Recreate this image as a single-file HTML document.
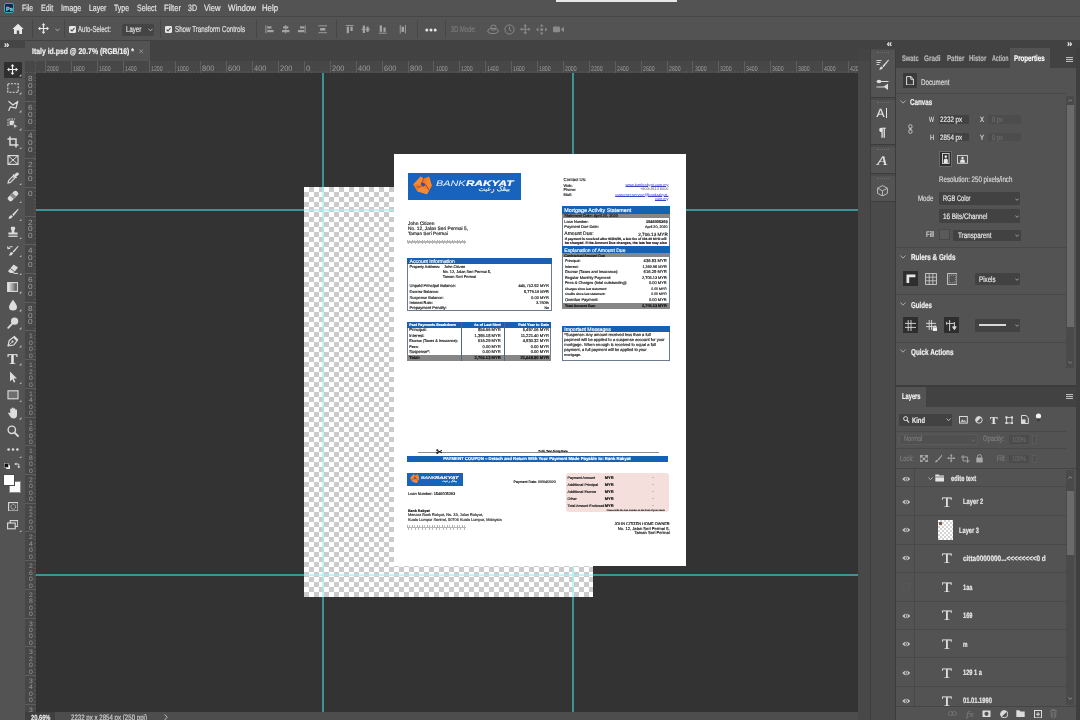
<!DOCTYPE html>
<html>
<head>
<meta charset="utf-8">
<title>Photoshop</title>
<style>
*{box-sizing:border-box;margin:0;padding:0}
html,body{width:1080px;height:720px;overflow:hidden;background:#535353}
#app{will-change:transform;position:relative;width:1080px;height:720px;overflow:hidden;font-family:"Liberation Sans",sans-serif;font-size:9px;color:#dedede}
.a{position:absolute;display:block}
.t{position:absolute;text-rendering:geometricPrecision;-webkit-text-stroke:0.18px;white-space:nowrap;line-height:1;transform-origin:0 50%}
</style>
</head>
<body>
<div id="app">
<div class="a" style="left:0px;top:0px;width:1080px;height:720px;background:#535353;"></div>
<div class="a" style="left:0px;top:16px;width:1080px;height:1px;background:#474747;"></div>
<div class="a" style="left:0px;top:40px;width:1080px;height:21px;background:#424242;"></div>
<div class="a" style="left:25px;top:41px;width:125px;height:20px;background:#535353;"></div>
<div class="a" style="left:0px;top:40px;width:25px;height:672px;background:#535353;"></div>
<div class="a" style="left:0px;top:40px;width:25px;height:8px;background:#454545;"></div>
<div class="a" style="left:25px;top:61px;width:833px;height:12px;background:#474747;"></div>
<div class="a" style="left:25px;top:73px;width:11px;height:639px;background:#474747;"></div>
<div class="a" style="left:36px;top:73px;width:822px;height:639px;background:#333333;"></div>
<div class="a" style="left:0px;top:712px;width:858px;height:8px;background:#535353;"></div>
<div class="a" style="left:858px;top:40px;width:222px;height:680px;background:#484848;"></div>
<div class="a" style="left:556px;top:0px;width:121px;height:2px;background:#e8e8e8;"></div>
<div class="a" style="left:4px;top:3px;width:10px;height:10px;background:#0a2a3c;border:1px solid #3fa0c8;border-radius:2px;"></div>
<span class="t" style="left:5.60px;top:7.00px;font-size:6px;color:#9fd4f0;font-weight:700;transform:scaleX(0.954);">Ps</span>
<span class="t" style="left:22.00px;top:4.00px;font-size:9.2px;color:#e6e6e6;transform:scaleX(0.742);">File</span>
<span class="t" style="left:40.80px;top:4.00px;font-size:9.2px;color:#e6e6e6;transform:scaleX(0.770);">Edit</span>
<span class="t" style="left:60.80px;top:4.00px;font-size:9.2px;color:#e6e6e6;transform:scaleX(0.798);">Image</span>
<span class="t" style="left:88.80px;top:4.00px;font-size:9.2px;color:#e6e6e6;transform:scaleX(0.756);">Layer</span>
<span class="t" style="left:114.00px;top:4.00px;font-size:9.2px;color:#e6e6e6;transform:scaleX(0.752);">Type</span>
<span class="t" style="left:137.00px;top:4.00px;font-size:9.2px;color:#e6e6e6;transform:scaleX(0.763);">Select</span>
<span class="t" style="left:164.00px;top:4.00px;font-size:9.2px;color:#e6e6e6;transform:scaleX(0.832);">Filter</span>
<span class="t" style="left:187.50px;top:4.00px;font-size:9.2px;color:#e6e6e6;transform:scaleX(0.765);">3D</span>
<span class="t" style="left:203.50px;top:4.00px;font-size:9.2px;color:#e6e6e6;transform:scaleX(0.834);">View</span>
<span class="t" style="left:227.50px;top:4.00px;font-size:9.2px;color:#e6e6e6;transform:scaleX(0.856);">Window</span>
<span class="t" style="left:262.00px;top:4.00px;font-size:9.2px;color:#e6e6e6;transform:scaleX(0.846);">Help</span>
<svg class="a" style="left:12px;top:23px;" width="12" height="12" viewBox="0 0 12 12"><path d="M6 0.8 L0.4 6 H2 V11 H4.8 V7.6 H7.2 V11 H10 V6 H11.6 Z" fill="#e8e8e8"/></svg>
<div class="a" style="left:32px;top:20px;width:1px;height:18px;background:#474747;"></div>
<svg class="a" style="left:38px;top:23.2px;" width="11" height="11" viewBox="0 0 11 11"><path d="M5.5 0 L7.4 2.3 H6.1 V4.9 H8.7 V3.6 L11 5.5 L8.7 7.4 V6.1 H6.1 V8.7 H7.4 L5.5 11 L3.6 8.7 H4.9 V6.1 H2.3 V7.4 L0 5.5 L2.3 3.6 V4.9 H4.9 V2.3 H3.6 Z" fill="#e8e8e8"/></svg>
<svg class="a" style="left:54.5px;top:28px;" width="5" height="4" viewBox="0 0 5 4"><path d="M0.5 0.7 L2.5 2.9 L4.5 0.7" stroke="#a8a8a8" stroke-width="1" fill="none"/></svg>
<div class="a" style="left:64px;top:20px;width:1px;height:18px;background:#474747;"></div>
<svg class="a" style="left:69px;top:25.5px;" width="7" height="7" viewBox="0 0 7 7"><rect x="0" y="0" width="7" height="7" rx="1.2" fill="#e6e6e6"/><path d="M1.6 3.6 L3 5 L5.5 2" stroke="#444" stroke-width="1.1" fill="none"/></svg>
<span class="t" style="left:78.30px;top:25.00px;font-size:8.6px;color:#e0e0e0;transform:scaleX(0.704);">Auto-Select:</span>
<div class="a" style="left:121.5px;top:23.5px;width:32.5px;height:12px;background:#444444;border-radius:2px;"></div>
<span class="t" style="left:126.00px;top:26.00px;font-size:8.2px;color:#e0e0e0;transform:scaleX(0.746);">Layer</span>
<svg class="a" style="left:147.5px;top:28px;" width="5" height="4" viewBox="0 0 5 4"><path d="M0.5 0.7 L2.5 2.9 L4.5 0.7" stroke="#b0b0b0" stroke-width="1" fill="none"/></svg>
<div class="a" style="left:160px;top:20px;width:1px;height:18px;background:#474747;"></div>
<svg class="a" style="left:165.3px;top:25.5px;" width="7" height="7" viewBox="0 0 7 7"><rect x="0" y="0" width="7" height="7" rx="1.2" fill="#e6e6e6"/><path d="M1.6 3.6 L3 5 L5.5 2" stroke="#444" stroke-width="1.1" fill="none"/></svg>
<span class="t" style="left:175.00px;top:25.00px;font-size:8.6px;color:#e0e0e0;transform:scaleX(0.722);">Show Transform Controls</span>
<div class="a" style="left:256px;top:20px;width:1px;height:18px;background:#474747;"></div>
<svg class="a" style="left:265px;top:25px;opacity:.95;" width="9.5" height="8.6" viewBox="0 0 10 10"><rect x="0" y="0.5" width="1" height="9" fill="#a9a9a9"/><rect x="2" y="1.5" width="5" height="2.6" fill="#a9a9a9"/><rect x="2" y="5.8" width="7.5" height="2.6" fill="#a9a9a9"/></svg>
<svg class="a" style="left:281px;top:25px;opacity:.95;" width="9.5" height="8.6" viewBox="0 0 10 10"><rect x="4.5" y="0" width="1" height="10" fill="#a9a9a9"/><rect x="2" y="1.5" width="6" height="2.6" fill="#a9a9a9"/><rect x="0.7" y="5.8" width="8.6" height="2.6" fill="#a9a9a9"/></svg>
<svg class="a" style="left:297px;top:25px;opacity:.95;" width="9.5" height="8.6" viewBox="0 0 10 10"><rect x="8.5" y="0.5" width="1" height="9" fill="#a9a9a9"/><rect x="3" y="1.5" width="5" height="2.6" fill="#a9a9a9"/><rect x="0.5" y="5.8" width="7.5" height="2.6" fill="#a9a9a9"/></svg>
<svg class="a" style="left:318px;top:25px;opacity:.95;" width="9.5" height="8.6" viewBox="0 0 10 10"><rect x="0" y="0.5" width="10" height="1" fill="#a9a9a9"/><rect x="0" y="8.5" width="10" height="1" fill="#a9a9a9"/><rect x="2" y="3.5" width="6" height="3" fill="#a9a9a9"/></svg>
<div class="a" style="left:336px;top:20px;width:1px;height:18px;background:#474747;"></div>
<svg class="a" style="left:345px;top:25px;opacity:.95;" width="9.5" height="8.6" viewBox="0 0 10 10"><rect x="0.5" y="0" width="9" height="1" fill="#a9a9a9"/><rect x="1.5" y="2" width="2.6" height="7.5" fill="#a9a9a9"/><rect x="5.8" y="2" width="2.6" height="5" fill="#a9a9a9"/></svg>
<svg class="a" style="left:361px;top:25px;opacity:.95;" width="9.5" height="8.6" viewBox="0 0 10 10"><rect x="0" y="4.5" width="10" height="1" fill="#a9a9a9"/><rect x="1.5" y="0.7" width="2.6" height="8.6" fill="#a9a9a9"/><rect x="5.8" y="2" width="2.6" height="6" fill="#a9a9a9"/></svg>
<svg class="a" style="left:378px;top:25px;opacity:.95;" width="9.5" height="8.6" viewBox="0 0 10 10"><rect x="0.5" y="9" width="9" height="1" fill="#a9a9a9"/><rect x="1.5" y="0.5" width="2.6" height="7.5" fill="#a9a9a9"/><rect x="5.8" y="3" width="2.6" height="5" fill="#a9a9a9"/></svg>
<svg class="a" style="left:399px;top:25px;opacity:.95;" width="7.6" height="8.6" viewBox="0 0 8 10"><rect x="0.5" y="0" width="1" height="10" fill="#a9a9a9"/><rect x="6.5" y="0" width="1" height="10" fill="#a9a9a9"/><rect x="2.5" y="2" width="3" height="6" fill="#a9a9a9"/></svg>
<div class="a" style="left:417px;top:20px;width:1px;height:18px;background:#474747;"></div>
<svg class="a" style="left:425px;top:27.5px;" width="12" height="4" viewBox="0 0 12 4"><circle cx="1.8" cy="2" r="1.5" fill="#e6e6e6"/><circle cx="6" cy="2" r="1.5" fill="#e6e6e6"/><circle cx="10.2" cy="2" r="1.5" fill="#e6e6e6"/></svg>
<div class="a" style="left:445px;top:20px;width:1px;height:18px;background:#474747;"></div>
<span class="t" style="left:451.00px;top:26.00px;font-size:8.2px;color:#7c7c7c;transform:scaleX(0.703);">3D Mode:</span>
<svg class="a" style="left:487px;top:24px;" width="12" height="11" viewBox="0 0 12 11"><ellipse cx="6" cy="7" rx="5.2" ry="2.6" fill="none" stroke="#8a8a8a" stroke-width="1"/><circle cx="6.5" cy="3.6" r="2.6" fill="none" stroke="#8a8a8a" stroke-width="1"/></svg>
<svg class="a" style="left:504px;top:24px;" width="11" height="11" viewBox="0 0 11 11"><circle cx="5.5" cy="5.5" r="4.6" fill="none" stroke="#8a8a8a" stroke-width="1"/><path d="M5.5 2.5 V5.8 L7.5 7" stroke="#8a8a8a" stroke-width="1" fill="none"/></svg>
<svg class="a" style="left:520px;top:24.3px;" width="10.5" height="10.5" viewBox="0 0 11 11"><path d="M5.5 0 L7.4 2.3 H6.1 V4.9 H8.7 V3.6 L11 5.5 L8.7 7.4 V6.1 H6.1 V8.7 H7.4 L5.5 11 L3.6 8.7 H4.9 V6.1 H2.3 V7.4 L0 5.5 L2.3 3.6 V4.9 H4.9 V2.3 H3.6 Z" fill="#8a8a8a"/></svg>
<svg class="a" style="left:536px;top:24px;" width="11.5" height="11" viewBox="0 0 11.5 11"><path d="M5.7 0 L7.6 2.4 H3.8 Z M5.7 11 L7.6 8.6 H3.8 Z M0 5.5 L2.4 3.6 V7.4 Z M11.4 5.5 L9 3.6 V7.4 Z" fill="#8a8a8a"/><circle cx="5.7" cy="5.5" r="1.6" fill="#8a8a8a"/></svg>
<svg class="a" style="left:552.5px;top:26px;" width="12" height="7" viewBox="0 0 12 7"><rect x="0" y="0.6" width="7" height="5.6" rx="1" fill="#8a8a8a"/><path d="M7.6 3.4 L11 0.6 V6.2 Z" fill="#8a8a8a"/></svg>
<span class="t" style="left:31.70px;top:47.00px;font-size:8.4px;color:#f2f2f2;font-weight:700;transform:scaleX(0.822);">Italy id.psd @ 20.7% (RGB/16) *</span>
<svg class="a" style="left:139px;top:49px;" width="4.5" height="4.5" viewBox="0 0 4.5 4.5"><path d="M0.4 0.4 L4.1 4.1 M4.1 0.4 L0.4 4.1" stroke="#9a9a9a" stroke-width="0.9"/></svg>
<svg class="a" style="left:3.8px;top:42.5px;" width="5" height="4.4" viewBox="0 0 5 4.4"><path d="M0.7 0.4 L2.1 2.2 L0.7 4 M3 0.4 L4.4 2.2 L3 4" stroke="#ececec" stroke-width="1.2" fill="none"/></svg>
<div class="a" style="left:36px;top:71px;width:822px;height:2px;background:repeating-linear-gradient(90deg,#5b5b5b 0 1px,transparent 1px 3.2375px);background-position:2.525px 0;opacity:.8;"></div>
<div class="a" style="left:34px;top:73px;width:2px;height:639px;background:repeating-linear-gradient(180deg,#5b5b5b 0 1px,transparent 1px 3.5875px);opacity:.8;"></div>
<div class="a" style="left:45px;top:61px;width:1px;height:12px;background:#5e5e5e;"></div>
<span class="t" style="left:47.00px;top:66.00px;font-size:7px;color:#9e9e9e;transform:scaleX(0.739);-webkit-text-stroke:0;">2000</span>
<div class="a" style="left:71px;top:61px;width:1px;height:12px;background:#5e5e5e;"></div>
<span class="t" style="left:72.90px;top:66.00px;font-size:7px;color:#9e9e9e;transform:scaleX(0.739);-webkit-text-stroke:0;">1800</span>
<div class="a" style="left:97px;top:61px;width:1px;height:12px;background:#5e5e5e;"></div>
<span class="t" style="left:98.80px;top:66.00px;font-size:7px;color:#9e9e9e;transform:scaleX(0.739);-webkit-text-stroke:0;">1600</span>
<div class="a" style="left:123px;top:61px;width:1px;height:12px;background:#5e5e5e;"></div>
<span class="t" style="left:124.70px;top:66.00px;font-size:7px;color:#9e9e9e;transform:scaleX(0.739);-webkit-text-stroke:0;">1400</span>
<div class="a" style="left:149px;top:61px;width:1px;height:12px;background:#5e5e5e;"></div>
<span class="t" style="left:150.60px;top:66.00px;font-size:7px;color:#9e9e9e;transform:scaleX(0.739);-webkit-text-stroke:0;">1200</span>
<div class="a" style="left:175px;top:61px;width:1px;height:12px;background:#5e5e5e;"></div>
<span class="t" style="left:176.50px;top:66.00px;font-size:7px;color:#9e9e9e;transform:scaleX(0.739);-webkit-text-stroke:0;">1000</span>
<div class="a" style="left:200px;top:61px;width:1px;height:12px;background:#5e5e5e;"></div>
<span class="t" style="left:202.40px;top:65.00px;font-size:8px;color:#9e9e9e;transform:scaleX(0.929);-webkit-text-stroke:0;">800</span>
<div class="a" style="left:226px;top:61px;width:1px;height:12px;background:#5e5e5e;"></div>
<span class="t" style="left:228.30px;top:65.00px;font-size:8px;color:#9e9e9e;transform:scaleX(0.929);-webkit-text-stroke:0;">600</span>
<div class="a" style="left:252px;top:61px;width:1px;height:12px;background:#5e5e5e;"></div>
<span class="t" style="left:254.20px;top:65.00px;font-size:8px;color:#9e9e9e;transform:scaleX(0.929);-webkit-text-stroke:0;">400</span>
<div class="a" style="left:278px;top:61px;width:1px;height:12px;background:#5e5e5e;"></div>
<span class="t" style="left:280.10px;top:65.00px;font-size:8px;color:#9e9e9e;transform:scaleX(0.929);-webkit-text-stroke:0;">200</span>
<div class="a" style="left:304px;top:61px;width:1px;height:12px;background:#5e5e5e;"></div>
<span class="t" style="left:306.00px;top:65.00px;font-size:8px;color:#9e9e9e;-webkit-text-stroke:0;">0</span>
<div class="a" style="left:330px;top:61px;width:1px;height:12px;background:#5e5e5e;"></div>
<span class="t" style="left:331.90px;top:65.00px;font-size:8px;color:#9e9e9e;transform:scaleX(0.929);-webkit-text-stroke:0;">200</span>
<div class="a" style="left:356px;top:61px;width:1px;height:12px;background:#5e5e5e;"></div>
<span class="t" style="left:357.80px;top:65.00px;font-size:8px;color:#9e9e9e;transform:scaleX(0.929);-webkit-text-stroke:0;">400</span>
<div class="a" style="left:382px;top:61px;width:1px;height:12px;background:#5e5e5e;"></div>
<span class="t" style="left:383.70px;top:65.00px;font-size:8px;color:#9e9e9e;transform:scaleX(0.929);-webkit-text-stroke:0;">600</span>
<div class="a" style="left:408px;top:61px;width:1px;height:12px;background:#5e5e5e;"></div>
<span class="t" style="left:409.60px;top:65.00px;font-size:8px;color:#9e9e9e;transform:scaleX(0.929);-webkit-text-stroke:0;">800</span>
<div class="a" style="left:433px;top:61px;width:1px;height:12px;background:#5e5e5e;"></div>
<span class="t" style="left:435.50px;top:66.00px;font-size:7px;color:#9e9e9e;transform:scaleX(0.739);-webkit-text-stroke:0;">1000</span>
<div class="a" style="left:459px;top:61px;width:1px;height:12px;background:#5e5e5e;"></div>
<span class="t" style="left:461.40px;top:66.00px;font-size:7px;color:#9e9e9e;transform:scaleX(0.739);-webkit-text-stroke:0;">1200</span>
<div class="a" style="left:485px;top:61px;width:1px;height:12px;background:#5e5e5e;"></div>
<span class="t" style="left:487.30px;top:66.00px;font-size:7px;color:#9e9e9e;transform:scaleX(0.739);-webkit-text-stroke:0;">1400</span>
<div class="a" style="left:511px;top:61px;width:1px;height:12px;background:#5e5e5e;"></div>
<span class="t" style="left:513.20px;top:66.00px;font-size:7px;color:#9e9e9e;transform:scaleX(0.739);-webkit-text-stroke:0;">1600</span>
<div class="a" style="left:537px;top:61px;width:1px;height:12px;background:#5e5e5e;"></div>
<span class="t" style="left:539.10px;top:66.00px;font-size:7px;color:#9e9e9e;transform:scaleX(0.739);-webkit-text-stroke:0;">1800</span>
<div class="a" style="left:563px;top:61px;width:1px;height:12px;background:#5e5e5e;"></div>
<span class="t" style="left:565.00px;top:66.00px;font-size:7px;color:#9e9e9e;transform:scaleX(0.739);-webkit-text-stroke:0;">2000</span>
<div class="a" style="left:589px;top:61px;width:1px;height:12px;background:#5e5e5e;"></div>
<span class="t" style="left:590.90px;top:66.00px;font-size:7px;color:#9e9e9e;transform:scaleX(0.739);-webkit-text-stroke:0;">2200</span>
<div class="a" style="left:615px;top:61px;width:1px;height:12px;background:#5e5e5e;"></div>
<span class="t" style="left:616.80px;top:66.00px;font-size:7px;color:#9e9e9e;transform:scaleX(0.739);-webkit-text-stroke:0;">2400</span>
<div class="a" style="left:641px;top:61px;width:1px;height:12px;background:#5e5e5e;"></div>
<span class="t" style="left:642.70px;top:66.00px;font-size:7px;color:#9e9e9e;transform:scaleX(0.739);-webkit-text-stroke:0;">2600</span>
<div class="a" style="left:667px;top:61px;width:1px;height:12px;background:#5e5e5e;"></div>
<span class="t" style="left:668.60px;top:66.00px;font-size:7px;color:#9e9e9e;transform:scaleX(0.739);-webkit-text-stroke:0;">2800</span>
<div class="a" style="left:692px;top:61px;width:1px;height:12px;background:#5e5e5e;"></div>
<span class="t" style="left:694.50px;top:66.00px;font-size:7px;color:#9e9e9e;transform:scaleX(0.739);-webkit-text-stroke:0;">3000</span>
<div class="a" style="left:718px;top:61px;width:1px;height:12px;background:#5e5e5e;"></div>
<span class="t" style="left:720.40px;top:66.00px;font-size:7px;color:#9e9e9e;transform:scaleX(0.739);-webkit-text-stroke:0;">3200</span>
<div class="a" style="left:744px;top:61px;width:1px;height:12px;background:#5e5e5e;"></div>
<span class="t" style="left:746.30px;top:66.00px;font-size:7px;color:#9e9e9e;transform:scaleX(0.739);-webkit-text-stroke:0;">3400</span>
<div class="a" style="left:770px;top:61px;width:1px;height:12px;background:#5e5e5e;"></div>
<span class="t" style="left:772.20px;top:66.00px;font-size:7px;color:#9e9e9e;transform:scaleX(0.739);-webkit-text-stroke:0;">3600</span>
<div class="a" style="left:796px;top:61px;width:1px;height:12px;background:#5e5e5e;"></div>
<span class="t" style="left:798.10px;top:66.00px;font-size:7px;color:#9e9e9e;transform:scaleX(0.739);-webkit-text-stroke:0;">3800</span>
<div class="a" style="left:822px;top:61px;width:1px;height:12px;background:#5e5e5e;"></div>
<span class="t" style="left:824.00px;top:66.00px;font-size:7px;color:#9e9e9e;transform:scaleX(0.739);-webkit-text-stroke:0;">4000</span>
<div class="a" style="left:848px;top:61px;width:1px;height:12px;background:#5e5e5e;"></div>
<span class="t" style="left:849.90px;top:66.00px;font-size:7px;color:#9e9e9e;transform:scaleX(0.739);-webkit-text-stroke:0;">4200</span>
<span class="t" style="left:28.20px;top:75.00px;font-size:7.6px;color:#9e9e9e;transform:scaleX(1.088);-webkit-text-stroke:0;">8</span>
<span class="t" style="left:28.20px;top:82.00px;font-size:7.6px;color:#9e9e9e;transform:scaleX(1.088);-webkit-text-stroke:0;">0</span>
<span class="t" style="left:28.20px;top:89.00px;font-size:7.6px;color:#9e9e9e;transform:scaleX(1.088);-webkit-text-stroke:0;">0</span>
<div class="a" style="left:25px;top:101px;width:11px;height:1px;background:#5e5e5e;"></div>
<span class="t" style="left:28.20px;top:104.00px;font-size:7.6px;color:#9e9e9e;transform:scaleX(1.088);-webkit-text-stroke:0;">6</span>
<span class="t" style="left:28.20px;top:111.00px;font-size:7.6px;color:#9e9e9e;transform:scaleX(1.088);-webkit-text-stroke:0;">0</span>
<span class="t" style="left:28.20px;top:118.00px;font-size:7.6px;color:#9e9e9e;transform:scaleX(1.088);-webkit-text-stroke:0;">0</span>
<div class="a" style="left:25px;top:130px;width:11px;height:1px;background:#5e5e5e;"></div>
<span class="t" style="left:28.20px;top:132.00px;font-size:7.6px;color:#9e9e9e;transform:scaleX(1.088);-webkit-text-stroke:0;">4</span>
<span class="t" style="left:28.20px;top:139.00px;font-size:7.6px;color:#9e9e9e;transform:scaleX(1.088);-webkit-text-stroke:0;">0</span>
<span class="t" style="left:28.20px;top:146.00px;font-size:7.6px;color:#9e9e9e;transform:scaleX(1.088);-webkit-text-stroke:0;">0</span>
<div class="a" style="left:25px;top:158px;width:11px;height:1px;background:#5e5e5e;"></div>
<span class="t" style="left:28.20px;top:161.00px;font-size:7.6px;color:#9e9e9e;transform:scaleX(1.088);-webkit-text-stroke:0;">2</span>
<span class="t" style="left:28.20px;top:168.00px;font-size:7.6px;color:#9e9e9e;transform:scaleX(1.088);-webkit-text-stroke:0;">0</span>
<span class="t" style="left:28.20px;top:175.00px;font-size:7.6px;color:#9e9e9e;transform:scaleX(1.088);-webkit-text-stroke:0;">0</span>
<div class="a" style="left:25px;top:187px;width:11px;height:1px;background:#5e5e5e;"></div>
<span class="t" style="left:28.20px;top:190.00px;font-size:7.6px;color:#9e9e9e;transform:scaleX(1.088);-webkit-text-stroke:0;">0</span>
<div class="a" style="left:25px;top:216px;width:11px;height:1px;background:#5e5e5e;"></div>
<span class="t" style="left:28.20px;top:219.00px;font-size:7.6px;color:#9e9e9e;transform:scaleX(1.088);-webkit-text-stroke:0;">2</span>
<span class="t" style="left:28.20px;top:225.00px;font-size:7.6px;color:#9e9e9e;transform:scaleX(1.088);-webkit-text-stroke:0;">0</span>
<span class="t" style="left:28.20px;top:232.00px;font-size:7.6px;color:#9e9e9e;transform:scaleX(1.088);-webkit-text-stroke:0;">0</span>
<div class="a" style="left:25px;top:244px;width:11px;height:1px;background:#5e5e5e;"></div>
<span class="t" style="left:28.20px;top:247.00px;font-size:7.6px;color:#9e9e9e;transform:scaleX(1.088);-webkit-text-stroke:0;">4</span>
<span class="t" style="left:28.20px;top:254.00px;font-size:7.6px;color:#9e9e9e;transform:scaleX(1.088);-webkit-text-stroke:0;">0</span>
<span class="t" style="left:28.20px;top:261.00px;font-size:7.6px;color:#9e9e9e;transform:scaleX(1.088);-webkit-text-stroke:0;">0</span>
<div class="a" style="left:25px;top:273px;width:11px;height:1px;background:#5e5e5e;"></div>
<span class="t" style="left:28.20px;top:276.00px;font-size:7.6px;color:#9e9e9e;transform:scaleX(1.088);-webkit-text-stroke:0;">6</span>
<span class="t" style="left:28.20px;top:283.00px;font-size:7.6px;color:#9e9e9e;transform:scaleX(1.088);-webkit-text-stroke:0;">0</span>
<span class="t" style="left:28.20px;top:290.00px;font-size:7.6px;color:#9e9e9e;transform:scaleX(1.088);-webkit-text-stroke:0;">0</span>
<div class="a" style="left:25px;top:302px;width:11px;height:1px;background:#5e5e5e;"></div>
<span class="t" style="left:28.20px;top:305.00px;font-size:7.6px;color:#9e9e9e;transform:scaleX(1.088);-webkit-text-stroke:0;">8</span>
<span class="t" style="left:28.20px;top:312.00px;font-size:7.6px;color:#9e9e9e;transform:scaleX(1.088);-webkit-text-stroke:0;">0</span>
<span class="t" style="left:28.20px;top:318.00px;font-size:7.6px;color:#9e9e9e;transform:scaleX(1.088);-webkit-text-stroke:0;">0</span>
<div class="a" style="left:25px;top:330px;width:11px;height:1px;background:#5e5e5e;"></div>
<span class="t" style="left:28.60px;top:334.00px;font-size:6.4px;color:#989898;transform:scaleX(1.068);-webkit-text-stroke:0;">1</span>
<span class="t" style="left:28.60px;top:341.00px;font-size:6.4px;color:#989898;transform:scaleX(1.068);-webkit-text-stroke:0;">0</span>
<span class="t" style="left:28.60px;top:347.00px;font-size:6.4px;color:#989898;transform:scaleX(1.068);-webkit-text-stroke:0;">0</span>
<span class="t" style="left:28.60px;top:354.00px;font-size:6.4px;color:#989898;transform:scaleX(1.068);-webkit-text-stroke:0;">0</span>
<div class="a" style="left:25px;top:359px;width:11px;height:1px;background:#5e5e5e;"></div>
<span class="t" style="left:28.60px;top:363.00px;font-size:6.4px;color:#989898;transform:scaleX(1.068);-webkit-text-stroke:0;">1</span>
<span class="t" style="left:28.60px;top:370.00px;font-size:6.4px;color:#989898;transform:scaleX(1.068);-webkit-text-stroke:0;">2</span>
<span class="t" style="left:28.60px;top:376.00px;font-size:6.4px;color:#989898;transform:scaleX(1.068);-webkit-text-stroke:0;">0</span>
<span class="t" style="left:28.60px;top:383.00px;font-size:6.4px;color:#989898;transform:scaleX(1.068);-webkit-text-stroke:0;">0</span>
<div class="a" style="left:25px;top:388px;width:11px;height:1px;background:#5e5e5e;"></div>
<span class="t" style="left:28.60px;top:392.00px;font-size:6.4px;color:#989898;transform:scaleX(1.068);-webkit-text-stroke:0;">1</span>
<span class="t" style="left:28.60px;top:398.00px;font-size:6.4px;color:#989898;transform:scaleX(1.068);-webkit-text-stroke:0;">4</span>
<span class="t" style="left:28.60px;top:405.00px;font-size:6.4px;color:#989898;transform:scaleX(1.068);-webkit-text-stroke:0;">0</span>
<span class="t" style="left:28.60px;top:411.00px;font-size:6.4px;color:#989898;transform:scaleX(1.068);-webkit-text-stroke:0;">0</span>
<div class="a" style="left:25px;top:417px;width:11px;height:1px;background:#5e5e5e;"></div>
<span class="t" style="left:28.60px;top:421.00px;font-size:6.4px;color:#989898;transform:scaleX(1.068);-webkit-text-stroke:0;">1</span>
<span class="t" style="left:28.60px;top:427.00px;font-size:6.4px;color:#989898;transform:scaleX(1.068);-webkit-text-stroke:0;">6</span>
<span class="t" style="left:28.60px;top:434.00px;font-size:6.4px;color:#989898;transform:scaleX(1.068);-webkit-text-stroke:0;">0</span>
<span class="t" style="left:28.60px;top:440.00px;font-size:6.4px;color:#989898;transform:scaleX(1.068);-webkit-text-stroke:0;">0</span>
<div class="a" style="left:25px;top:445px;width:11px;height:1px;background:#5e5e5e;"></div>
<span class="t" style="left:28.60px;top:449.00px;font-size:6.4px;color:#989898;transform:scaleX(1.068);-webkit-text-stroke:0;">1</span>
<span class="t" style="left:28.60px;top:456.00px;font-size:6.4px;color:#989898;transform:scaleX(1.068);-webkit-text-stroke:0;">8</span>
<span class="t" style="left:28.60px;top:462.00px;font-size:6.4px;color:#989898;transform:scaleX(1.068);-webkit-text-stroke:0;">0</span>
<span class="t" style="left:28.60px;top:469.00px;font-size:6.4px;color:#989898;transform:scaleX(1.068);-webkit-text-stroke:0;">0</span>
<div class="a" style="left:25px;top:474px;width:11px;height:1px;background:#5e5e5e;"></div>
<span class="t" style="left:28.60px;top:478.00px;font-size:6.4px;color:#989898;transform:scaleX(1.068);-webkit-text-stroke:0;">2</span>
<span class="t" style="left:28.60px;top:484.00px;font-size:6.4px;color:#989898;transform:scaleX(1.068);-webkit-text-stroke:0;">0</span>
<span class="t" style="left:28.60px;top:491.00px;font-size:6.4px;color:#989898;transform:scaleX(1.068);-webkit-text-stroke:0;">0</span>
<span class="t" style="left:28.60px;top:497.00px;font-size:6.4px;color:#989898;transform:scaleX(1.068);-webkit-text-stroke:0;">0</span>
<div class="a" style="left:25px;top:503px;width:11px;height:1px;background:#5e5e5e;"></div>
<span class="t" style="left:28.60px;top:507.00px;font-size:6.4px;color:#989898;transform:scaleX(1.068);-webkit-text-stroke:0;">2</span>
<span class="t" style="left:28.60px;top:513.00px;font-size:6.4px;color:#989898;transform:scaleX(1.068);-webkit-text-stroke:0;">2</span>
<span class="t" style="left:28.60px;top:520.00px;font-size:6.4px;color:#989898;transform:scaleX(1.068);-webkit-text-stroke:0;">0</span>
<span class="t" style="left:28.60px;top:526.00px;font-size:6.4px;color:#989898;transform:scaleX(1.068);-webkit-text-stroke:0;">0</span>
<div class="a" style="left:25px;top:531px;width:11px;height:1px;background:#5e5e5e;"></div>
<span class="t" style="left:28.60px;top:535.00px;font-size:6.4px;color:#989898;transform:scaleX(1.068);-webkit-text-stroke:0;">2</span>
<span class="t" style="left:28.60px;top:542.00px;font-size:6.4px;color:#989898;transform:scaleX(1.068);-webkit-text-stroke:0;">4</span>
<span class="t" style="left:28.60px;top:548.00px;font-size:6.4px;color:#989898;transform:scaleX(1.068);-webkit-text-stroke:0;">0</span>
<span class="t" style="left:28.60px;top:555.00px;font-size:6.4px;color:#989898;transform:scaleX(1.068);-webkit-text-stroke:0;">0</span>
<div class="a" style="left:25px;top:560px;width:11px;height:1px;background:#5e5e5e;"></div>
<span class="t" style="left:28.60px;top:564.00px;font-size:6.4px;color:#989898;transform:scaleX(1.068);-webkit-text-stroke:0;">2</span>
<span class="t" style="left:28.60px;top:571.00px;font-size:6.4px;color:#989898;transform:scaleX(1.068);-webkit-text-stroke:0;">6</span>
<span class="t" style="left:28.60px;top:577.00px;font-size:6.4px;color:#989898;transform:scaleX(1.068);-webkit-text-stroke:0;">0</span>
<span class="t" style="left:28.60px;top:584.00px;font-size:6.4px;color:#989898;transform:scaleX(1.068);-webkit-text-stroke:0;">0</span>
<div class="a" style="left:25px;top:589px;width:11px;height:1px;background:#5e5e5e;"></div>
<span class="t" style="left:28.60px;top:593.00px;font-size:6.4px;color:#989898;transform:scaleX(1.068);-webkit-text-stroke:0;">2</span>
<span class="t" style="left:28.60px;top:599.00px;font-size:6.4px;color:#989898;transform:scaleX(1.068);-webkit-text-stroke:0;">8</span>
<span class="t" style="left:28.60px;top:606.00px;font-size:6.4px;color:#989898;transform:scaleX(1.068);-webkit-text-stroke:0;">0</span>
<span class="t" style="left:28.60px;top:612.00px;font-size:6.4px;color:#989898;transform:scaleX(1.068);-webkit-text-stroke:0;">0</span>
<div class="a" style="left:25px;top:618px;width:11px;height:1px;background:#5e5e5e;"></div>
<span class="t" style="left:28.60px;top:622.00px;font-size:6.4px;color:#989898;transform:scaleX(1.068);-webkit-text-stroke:0;">3</span>
<span class="t" style="left:28.60px;top:628.00px;font-size:6.4px;color:#989898;transform:scaleX(1.068);-webkit-text-stroke:0;">0</span>
<span class="t" style="left:28.60px;top:634.00px;font-size:6.4px;color:#989898;transform:scaleX(1.068);-webkit-text-stroke:0;">0</span>
<span class="t" style="left:28.60px;top:641.00px;font-size:6.4px;color:#989898;transform:scaleX(1.068);-webkit-text-stroke:0;">0</span>
<div class="a" style="left:25px;top:646px;width:11px;height:1px;background:#5e5e5e;"></div>
<span class="t" style="left:28.60px;top:650.00px;font-size:6.4px;color:#989898;transform:scaleX(1.068);-webkit-text-stroke:0;">3</span>
<span class="t" style="left:28.60px;top:657.00px;font-size:6.4px;color:#989898;transform:scaleX(1.068);-webkit-text-stroke:0;">2</span>
<span class="t" style="left:28.60px;top:663.00px;font-size:6.4px;color:#989898;transform:scaleX(1.068);-webkit-text-stroke:0;">0</span>
<span class="t" style="left:28.60px;top:670.00px;font-size:6.4px;color:#989898;transform:scaleX(1.068);-webkit-text-stroke:0;">0</span>
<div class="a" style="left:25px;top:675px;width:11px;height:1px;background:#5e5e5e;"></div>
<span class="t" style="left:28.60px;top:679.00px;font-size:6.4px;color:#989898;transform:scaleX(1.068);-webkit-text-stroke:0;">3</span>
<span class="t" style="left:28.60px;top:685.00px;font-size:6.4px;color:#989898;transform:scaleX(1.068);-webkit-text-stroke:0;">4</span>
<span class="t" style="left:28.60px;top:692.00px;font-size:6.4px;color:#989898;transform:scaleX(1.068);-webkit-text-stroke:0;">0</span>
<span class="t" style="left:28.60px;top:698.00px;font-size:6.4px;color:#989898;transform:scaleX(1.068);-webkit-text-stroke:0;">0</span>
<div class="a" style="left:25px;top:704px;width:11px;height:1px;background:#5e5e5e;"></div>
<span class="t" style="left:28.60px;top:708.00px;font-size:6.4px;color:#989898;transform:scaleX(1.068);-webkit-text-stroke:0;">3</span>
<div class="a" style="left:25px;top:61px;width:11px;height:12px;background:#474747;border-right:1px dotted #5a5a5a;border-bottom:1px dotted #5a5a5a;"></div>
<div class="a" style="left:25px;top:712px;width:833px;height:8px;background:#4d4d4d;"></div>
<div class="a" style="left:25px;top:712px;width:30px;height:8px;background:#3f3f3f;"></div>
<span class="t" style="left:31.00px;top:714.00px;font-size:7.4px;color:#eaeaea;font-weight:700;transform:scaleX(0.777);">20.66%</span>
<span class="t" style="left:71.00px;top:714.00px;font-size:7.8px;color:#d0d0d0;transform:scaleX(0.786);">2232 px x 2854 px (250 ppi)</span>
<svg class="a" style="left:164px;top:713.5px;" width="4" height="6.5" viewBox="0 0 4 6.5"><path d="M0.6 0.4 L3.2 3.2 L0.6 6" stroke="#c8c8c8" stroke-width="0.9" fill="none"/></svg>
<div class="a" style="left:3.5px;top:62px;width:18.5px;height:15.5px;background:#2f2f2f;border-radius:1px;"></div>
<svg class="a" style="left:7px;top:64.2px;" width="11" height="11" viewBox="0 0 11 11"><path d="M5.5 0 L7.4 2.3 H6.1 V4.9 H8.7 V3.6 L11 5.5 L8.7 7.4 V6.1 H6.1 V8.7 H7.4 L5.5 11 L3.6 8.7 H4.9 V6.1 H2.3 V7.4 L0 5.5 L2.3 3.6 V4.9 H4.9 V2.3 H3.6 Z" fill="#f0f0f0"/></svg>
<svg class="a" style="left:19.2px;top:74.2px;" width="2.4" height="2.4" viewBox="0 0 2.4 2.4"><path d="M2.4 0 V2.4 H0 Z" fill="#bdbdbd"/></svg>
<svg class="a" style="left:6.5px;top:81.78px;" width="12" height="12" viewBox="0 0 12 12"><rect x="0.8" y="1.8" width="10.4" height="8.4" fill="none" stroke="#dcdcdc" stroke-width="1.1" stroke-dasharray="2 1.2"/></svg>
<svg class="a" style="left:19.2px;top:92.28px;" width="2.4" height="2.4" viewBox="0 0 2.4 2.4"><path d="M2.4 0 V2.4 H0 Z" fill="#bdbdbd"/></svg>
<svg class="a" style="left:6.5px;top:99.86px;" width="12" height="12" viewBox="0 0 12 12"><path d="M1.5 1.2 L6 5 L10.8 1.4 L9 8.2 L3.4 6.8 L1.6 10.8" fill="none" stroke="#dcdcdc" stroke-width="1.2" stroke-linejoin="round"/></svg>
<svg class="a" style="left:19.2px;top:110.36px;" width="2.4" height="2.4" viewBox="0 0 2.4 2.4"><path d="M2.4 0 V2.4 H0 Z" fill="#bdbdbd"/></svg>
<svg class="a" style="left:6.5px;top:117.94px;" width="12" height="12" viewBox="0 0 12 12"><path d="M1 8 V1 H8" fill="none" stroke="#dcdcdc" stroke-width="1" stroke-dasharray="1.6 1"/><rect x="2.6" y="2.6" width="4.6" height="4.6" fill="#dcdcdc"/><path d="M6.2 5.6 L11 8.4 L8.6 8.9 L7.6 11.2 Z" fill="#dcdcdc" stroke="#535353" stroke-width="0.5"/></svg>
<svg class="a" style="left:19.2px;top:128.44px;" width="2.4" height="2.4" viewBox="0 0 2.4 2.4"><path d="M2.4 0 V2.4 H0 Z" fill="#bdbdbd"/></svg>
<svg class="a" style="left:6.5px;top:136.02px;" width="12" height="12" viewBox="0 0 12 12"><path d="M3 0.5 V9 H11.5 M0.5 3 H9 V11.5" fill="none" stroke="#dcdcdc" stroke-width="1.5"/></svg>
<svg class="a" style="left:19.2px;top:146.52px;" width="2.4" height="2.4" viewBox="0 0 2.4 2.4"><path d="M2.4 0 V2.4 H0 Z" fill="#bdbdbd"/></svg>
<svg class="a" style="left:6.5px;top:154.1px;" width="12" height="12" viewBox="0 0 12 12"><rect x="1" y="1.6" width="10" height="8.8" fill="none" stroke="#dcdcdc" stroke-width="1.2"/><path d="M1 1.6 L11 10.4 M11 1.6 L1 10.4" stroke="#dcdcdc" stroke-width="1"/></svg>
<svg class="a" style="left:6.5px;top:172.18px;" width="12" height="12" viewBox="0 0 12 12"><path d="M1 11 L1.6 8.6 L6.6 3.6 L8.4 5.4 L3.4 10.4 Z" fill="none" stroke="#dcdcdc" stroke-width="1.1"/><path d="M6.2 2.4 L9.6 5.8 M7.4 4.6 L9.2 1.6 Q10.4 0.6 11 1.4 Q11.6 2.2 10.4 3 Z" fill="#dcdcdc" stroke="#dcdcdc" stroke-width="1.3"/></svg>
<svg class="a" style="left:19.2px;top:182.68px;" width="2.4" height="2.4" viewBox="0 0 2.4 2.4"><path d="M2.4 0 V2.4 H0 Z" fill="#bdbdbd"/></svg>
<svg class="a" style="left:6.5px;top:190.26px;" width="12" height="12" viewBox="0 0 12 12"><g transform="rotate(-45 6 6)"><rect x="0" y="3.4" width="12" height="5.2" rx="2" fill="#dcdcdc"/><rect x="4.2" y="3.4" width="3.6" height="5.2" fill="#8a8a8a"/></g></svg>
<svg class="a" style="left:19.2px;top:200.76px;" width="2.4" height="2.4" viewBox="0 0 2.4 2.4"><path d="M2.4 0 V2.4 H0 Z" fill="#bdbdbd"/></svg>
<svg class="a" style="left:6.5px;top:208.34px;" width="12" height="12" viewBox="0 0 12 12"><path d="M11 0.8 L5.2 6.6 L6.6 8 L11.6 1.6 Z" fill="#dcdcdc"/><path d="M4.6 7.2 Q2 7.4 1.6 11 Q5 10.8 5.8 8.4 Z" fill="#dcdcdc"/></svg>
<svg class="a" style="left:19.2px;top:218.84px;" width="2.4" height="2.4" viewBox="0 0 2.4 2.4"><path d="M2.4 0 V2.4 H0 Z" fill="#bdbdbd"/></svg>
<svg class="a" style="left:6.5px;top:226.42px;" width="12" height="12" viewBox="0 0 12 12"><path d="M4.2 0.8 H7.8 Q9 2.6 7.4 4.6 V6.4 H10.6 V8.6 H1.4 V6.4 H4.6 V4.6 Q3 2.6 4.2 0.8 Z" fill="#dcdcdc"/><rect x="1.4" y="9.6" width="9.2" height="1.3" fill="#dcdcdc"/></svg>
<svg class="a" style="left:19.2px;top:236.92px;" width="2.4" height="2.4" viewBox="0 0 2.4 2.4"><path d="M2.4 0 V2.4 H0 Z" fill="#bdbdbd"/></svg>
<svg class="a" style="left:6.5px;top:244.5px;" width="12" height="12" viewBox="0 0 12 12"><path d="M11 0.8 L5.6 6.4 L6.8 7.6 L11.6 1.6 Z" fill="#dcdcdc"/><path d="M5 7 Q2.6 7.2 2.2 10.8 Q5.4 10.6 6.2 8.2 Z" fill="#dcdcdc"/><path d="M0.8 3.6 Q2.6 0.8 5.6 1.8 M0.6 1.4 L0.9 3.8 L3.2 3.4" stroke="#dcdcdc" stroke-width="1" fill="none"/></svg>
<svg class="a" style="left:19.2px;top:255px;" width="2.4" height="2.4" viewBox="0 0 2.4 2.4"><path d="M2.4 0 V2.4 H0 Z" fill="#bdbdbd"/></svg>
<svg class="a" style="left:6.5px;top:262.58px;" width="12" height="12" viewBox="0 0 12 12"><path d="M6.6 1.4 L11 4.6 L6.6 10 H3.2 L1 8.2 Z" fill="#dcdcdc"/><path d="M3.4 5.6 L7.8 8.8" stroke="#535353" stroke-width="0.9"/><path d="M6.6 10.4 H11" stroke="#dcdcdc" stroke-width="1"/></svg>
<svg class="a" style="left:19.2px;top:273.08px;" width="2.4" height="2.4" viewBox="0 0 2.4 2.4"><path d="M2.4 0 V2.4 H0 Z" fill="#bdbdbd"/></svg>
<svg class="a" style="left:7px;top:281.66px" width="11" height="10" viewBox="0 0 11 10"><defs><linearGradient id="gt" x1="0" y1="0" x2="1" y2="0"><stop offset="0" stop-color="#f2f2f2"/><stop offset="1" stop-color="#4a4a4a"/></linearGradient></defs><rect x="0.6" y="0.6" width="9.8" height="8.8" fill="url(#gt)" stroke="#dcdcdc" stroke-width="1.1"/></svg>
<svg class="a" style="left:19.2px;top:291.16px;" width="2.4" height="2.4" viewBox="0 0 2.4 2.4"><path d="M2.4 0 V2.4 H0 Z" fill="#bdbdbd"/></svg>
<svg class="a" style="left:6.5px;top:298.74px;" width="12" height="12" viewBox="0 0 12 12"><path d="M6 0.8 Q10 6 10 8 A4 3.6 0 0 1 2 8 Q2 6 6 0.8 Z" fill="#dcdcdc"/></svg>
<svg class="a" style="left:19.2px;top:309.24px;" width="2.4" height="2.4" viewBox="0 0 2.4 2.4"><path d="M2.4 0 V2.4 H0 Z" fill="#bdbdbd"/></svg>
<svg class="a" style="left:6.5px;top:316.82px;" width="12" height="12" viewBox="0 0 12 12"><circle cx="7.6" cy="4.2" r="3.6" fill="#dcdcdc"/><path d="M5 6.8 L1.2 10.8" stroke="#dcdcdc" stroke-width="1.8" stroke-linecap="round"/></svg>
<svg class="a" style="left:19.2px;top:327.32px;" width="2.4" height="2.4" viewBox="0 0 2.4 2.4"><path d="M2.4 0 V2.4 H0 Z" fill="#bdbdbd"/></svg>
<svg class="a" style="left:6.5px;top:334.9px;" width="12" height="12" viewBox="0 0 12 12"><path d="M1 11 L2.2 5.4 L6.4 2.2 L10 5.8 L6.8 10 Z" fill="none" stroke="#dcdcdc" stroke-width="1.2" stroke-linejoin="round"/><path d="M6.8 1.4 L10.8 5.4" stroke="#dcdcdc" stroke-width="2"/><circle cx="5.6" cy="6.6" r="1.1" fill="#dcdcdc"/><path d="M1.2 10.8 L5 7.2" stroke="#dcdcdc" stroke-width="0.8"/></svg>
<svg class="a" style="left:19.2px;top:345.4px;" width="2.4" height="2.4" viewBox="0 0 2.4 2.4"><path d="M2.4 0 V2.4 H0 Z" fill="#bdbdbd"/></svg>
<span class="t" style="left:7.60px;top:353.00px;font-size:15px;color:#e6e6e6;font-weight:700;font-family:'Liberation Serif',serif;">T</span>
<svg class="a" style="left:19.2px;top:363.48px;" width="2.4" height="2.4" viewBox="0 0 2.4 2.4"><path d="M2.4 0 V2.4 H0 Z" fill="#bdbdbd"/></svg>
<svg class="a" style="left:6.5px;top:371.06px;" width="12" height="12" viewBox="0 0 12 12"><path d="M3 0.6 L10 7.4 L6.8 7.6 L8.4 11 L6.8 11.6 L5.4 8.2 L3 10.4 Z" fill="#dcdcdc"/></svg>
<svg class="a" style="left:19.2px;top:381.56px;" width="2.4" height="2.4" viewBox="0 0 2.4 2.4"><path d="M2.4 0 V2.4 H0 Z" fill="#bdbdbd"/></svg>
<svg class="a" style="left:6.5px;top:389.34px;" width="12" height="12" viewBox="0 0 12 12"><rect x="1" y="1.8" width="10" height="8" fill="#6e6e6e" stroke="#dcdcdc" stroke-width="1.1"/></svg>
<svg class="a" style="left:19.2px;top:399.84px;" width="2.4" height="2.4" viewBox="0 0 2.4 2.4"><path d="M2.4 0 V2.4 H0 Z" fill="#bdbdbd"/></svg>
<svg class="a" style="left:6.5px;top:406.8px;" width="12" height="12" viewBox="0 0 12 12"><path d="M3.2 6.4 V2.6 Q3.2 1.6 4 1.6 Q4.8 1.6 4.8 2.6 V1.6 Q4.8 0.6 5.7 0.6 Q6.6 0.6 6.6 1.6 V2.2 Q6.6 1.2 7.5 1.2 Q8.4 1.2 8.4 2.2 V3.4 Q8.4 2.6 9.2 2.6 Q10 2.6 10 3.6 V8 Q10 11.4 6.6 11.4 Q4.4 11.4 3.2 9.4 L1.2 6.6 Q0.8 5.6 1.8 5.4 Q2.6 5.4 3.2 6.4 Z" fill="#dcdcdc"/></svg>
<svg class="a" style="left:19.2px;top:417.3px;" width="2.4" height="2.4" viewBox="0 0 2.4 2.4"><path d="M2.4 0 V2.4 H0 Z" fill="#bdbdbd"/></svg>
<svg class="a" style="left:6.5px;top:425px;" width="12" height="12" viewBox="0 0 12 12"><circle cx="4.8" cy="4.8" r="3.7" fill="none" stroke="#dcdcdc" stroke-width="1.4"/><path d="M7.6 7.6 L11 11" stroke="#dcdcdc" stroke-width="1.8" stroke-linecap="round"/></svg>
<svg class="a" style="left:7px;top:448px;" width="12" height="3" viewBox="0 0 12 3"><circle cx="1.6" cy="1.5" r="1.3" fill="#dcdcdc"/><circle cx="6" cy="1.5" r="1.3" fill="#dcdcdc"/><circle cx="10.4" cy="1.5" r="1.3" fill="#dcdcdc"/></svg>
<svg class="a" style="left:19.2px;top:455.5px;" width="2.4" height="2.4" viewBox="0 0 2.4 2.4"><path d="M2.4 0 V2.4 H0 Z" fill="#bdbdbd"/></svg>
<svg class="a" style="left:3.5px;top:462.5px;" width="6.5" height="6.5" viewBox="0 0 6.5 6.5"><rect x="2.2" y="2.2" width="4" height="4" fill="#f4f4f4"/><rect x="0.3" y="0.3" width="4" height="4" fill="#111" stroke="#ccc" stroke-width="0.5"/></svg>
<svg class="a" style="left:13.5px;top:461.5px;" width="6.5" height="6.5" viewBox="0 0 6.5 6.5"><path d="M1.2 2 H4.8 V5.6" fill="none" stroke="#dcdcdc" stroke-width="0.9"/><path d="M2.4 0.4 L0.4 2 L2.4 3.6 Z M3.2 4.4 L4.8 6.4 L6.4 4.4 Z" fill="#dcdcdc"/></svg>
<div class="a" style="left:9px;top:481px;width:11.6px;height:11.8px;background:#fafafa;border:1px solid #8a8a8a;"></div>
<div class="a" style="left:2.5px;top:474px;width:12px;height:11.6px;background:#ffffff;border:1px solid #4a4a4a;"></div>
<svg class="a" style="left:7.6px;top:501.5px;" width="10.6" height="9.6" viewBox="0 0 10.6 9.6"><rect x="0.6" y="0.6" width="9.4" height="8.4" fill="none" stroke="#dcdcdc" stroke-width="1.1"/><circle cx="5.3" cy="4.8" r="2.4" fill="none" stroke="#dcdcdc" stroke-width="0.9" stroke-dasharray="1.2 0.8"/></svg>
<svg class="a" style="left:7px;top:520px;" width="11.4" height="9.6" viewBox="0 0 11.4 9.6"><rect x="3.2" y="0.6" width="7.6" height="5.8" fill="#535353" stroke="#dcdcdc" stroke-width="1.1"/><rect x="0.6" y="3" width="7.6" height="5.8" fill="#535353" stroke="#dcdcdc" stroke-width="1.1"/></svg>
<svg class="a" style="left:19.4px;top:529.5px;" width="2.4" height="2.4" viewBox="0 0 2.4 2.4"><path d="M2.4 0 V2.4 H0 Z" fill="#bdbdbd"/></svg>
<div class="a" style="left:303.5px;top:187px;width:289px;height:410px;background-color:#ffffff;background-image:conic-gradient(#cbcbcb 25%,#fff 0 50%,#cbcbcb 0 75%,#fff 0);background-size:10px 10px;background-position:0 0;"></div>
<div class="a" style="left:322.4px;top:73px;width:1.9px;height:114px;background:#3d9496;"></div>
<div class="a" style="left:322.4px;top:597px;width:1.9px;height:115px;background:#3d9496;"></div>
<div class="a" style="left:322.4px;top:187px;width:1.9px;height:410px;background:rgba(165,242,242,.68);"></div>
<div class="a" style="left:571.9px;top:73px;width:1.9px;height:114px;background:#3d9496;"></div>
<div class="a" style="left:571.9px;top:597px;width:1.9px;height:115px;background:#3d9496;"></div>
<div class="a" style="left:571.9px;top:187px;width:1.9px;height:410px;background:rgba(165,242,242,.68);"></div>
<div class="a" style="left:36px;top:209.2px;width:267.5px;height:1.9px;background:#3d9496;"></div>
<div class="a" style="left:592.5px;top:209.2px;width:265.5px;height:1.9px;background:#3d9496;"></div>
<div class="a" style="left:303.5px;top:209.2px;width:289px;height:1.9px;background:rgba(165,242,242,.68);"></div>
<div class="a" style="left:36px;top:573.9px;width:267.5px;height:1.9px;background:#3d9496;"></div>
<div class="a" style="left:592.5px;top:573.9px;width:265.5px;height:1.9px;background:#3d9496;"></div>
<div class="a" style="left:303.5px;top:573.9px;width:289px;height:1.9px;background:rgba(165,242,242,.68);"></div>
<div class="a" style="left:394px;top:154px;width:292px;height:412px;background:#ffffff;"></div>
<div class="a" style="left:408px;top:173px;width:113px;height:27px;background:#1763bd;"></div>
<svg class="a" style="left:413px;top:176.2px" width="19" height="18.4" viewBox="0 0 19 18.4"><path d="M7.7 0.4 L10.6 2.4 L16 0.4 L18.8 9.6 L14 18.2 L4.2 15.2 L0.2 8.4 Z" fill="#f47b20"/><path d="M7.7 0.4 L10.6 2.4 L8.2 8.2 L0.2 8.4 Z" fill="#f58a35"/><path d="M16 0.4 L18.8 9.6 L16.4 14 L12.4 8.2 Z" fill="#f9862a"/><path d="M4.2 15.2 L14 18.2 L16.4 14 L8 10.6 Z" fill="#f28a3a"/><path d="M10.8 2 L8 8.4 M12.6 8.4 L16.2 14.4 M8 10.8 L3.6 11" stroke="#9a3c28" stroke-width="0.8" fill="none"/><path d="M8.6 6.6 L11.4 7 L12.4 9.2 L10 10.8 L8.2 9.4 Z" fill="#3c4aa8"/></svg>
<span class="t" style="left:436.00px;top:180.00px;font-size:8.1px;color:#eef4ff;font-style:italic;transform:scaleX(1.342);-webkit-text-stroke:0;">BANK</span>
<span class="t" style="left:465.60px;top:180.00px;font-size:8.1px;color:#ffffff;font-weight:700;font-style:italic;transform:scaleX(1.456);-webkit-text-stroke:0.16px;">RAKYAT</span>
<span class="t" dir="rtl" style="left:471.5px;top:186.2px;font-size:6.8px;color:#dfe9f8;font-family:'DejaVu Sans',sans-serif;width:38.5px;text-align:right">بيڠک رعيت</span>
<span class="t" style="left:563.60px;top:178.00px;font-size:4.3px;color:#222;-webkit-text-stroke:0.16px;">Contact Us:</span>
<span class="t" style="left:563.60px;top:184.00px;font-size:3.9px;color:#222;-webkit-text-stroke:0.16px;">Web:</span>
<span class="t" style="left:563.60px;top:188.00px;font-size:3.9px;color:#222;-webkit-text-stroke:0.16px;">Phone:</span>
<span class="t" style="left:563.60px;top:193.00px;font-size:3.9px;color:#222;-webkit-text-stroke:0.16px;">Mail:</span>
<span class="t" style="left:625.47px;top:183.00px;font-size:3.9px;color:#3a44c6;text-decoration:underline;text-decoration-thickness:0.35px;text-underline-offset:0.4px;-webkit-text-stroke:0;">www.bankrakyat.com.my</span>
<span class="t" style="left:640.08px;top:187.00px;font-size:3.9px;color:#555;-webkit-text-stroke:0;">+603-2614 6000</span>
<span class="t" style="left:615.22px;top:193.00px;font-size:3.9px;color:#3a44c6;text-decoration:underline;text-decoration-thickness:0.35px;text-underline-offset:0.4px;-webkit-text-stroke:0;">customer.service@bankrakyat.</span>
<span class="t" style="left:654.95px;top:197.00px;font-size:3.9px;color:#3a44c6;text-decoration:underline;text-decoration-thickness:0.35px;text-underline-offset:0.4px;-webkit-text-stroke:0;">com.my</span>
<span class="t" style="left:408.00px;top:223.00px;font-size:4.8px;color:#1a1a1a;-webkit-text-stroke:0.16px;">John Citizen</span>
<span class="t" style="left:408.00px;top:228.00px;font-size:4.8px;color:#1a1a1a;-webkit-text-stroke:0.16px;">No. 12, Jalan Seri Permai 5,</span>
<span class="t" style="left:408.00px;top:232.00px;font-size:4.7px;color:#1a1a1a;-webkit-text-stroke:0.16px;">Taman Seri Permai</span>
<div class="a" style="left:407px;top:241.3px;width:59px;height:1.7px;background:#b4b4b4;"></div>
<div class="a" style="left:407px;top:240px;width:59px;height:1.3px;background:repeating-linear-gradient(90deg,#b0b0b0 0 1px,transparent 1px 2px,#c4c4c4 2px 2.6px,transparent 2.6px 5px);"></div>
<div class="a" style="left:407px;top:243px;width:59px;height:1.3px;background:repeating-linear-gradient(90deg,transparent 0 1px,#b6b6b6 1px 1.8px,transparent 1.8px 4px,#bebebe 4px 5px,transparent 5px 7px);"></div>
<div class="a" style="left:562px;top:206px;width:108.4px;height:102.6px;background:#ffffff;border:0.6px solid #6c7a90;"></div>
<div class="a" style="left:562px;top:206px;width:108.4px;height:8px;background:#1760b2;"></div>
<span class="t" style="left:564.30px;top:209.00px;font-size:5.38px;color:#ffffff;-webkit-text-stroke:0.16px;">Mortgage Activity Statement</span>
<div class="a" style="left:562px;top:214px;width:108.4px;height:3.6px;background:#868686;"></div>
<span class="t" style="left:564.30px;top:214.00px;font-size:3.94px;color:#111;-webkit-text-stroke:0.16px;">Statement Date: April 20, 2020</span>
<span class="t" style="left:564.30px;top:221.00px;font-size:3.83px;color:#1a1a1a;-webkit-text-stroke:0.16px;">Loan Number:</span>
<span class="t" style="left:646.02px;top:220.00px;font-size:3.88px;color:#1a1a1a;font-weight:700;-webkit-text-stroke:0.16px;">1546005293</span>
<span class="t" style="left:564.30px;top:225.00px;font-size:3.98px;color:#1a1a1a;-webkit-text-stroke:0.16px;">Payment Due Date:</span>
<span class="t" style="left:645.02px;top:226.00px;font-size:3.66px;color:#1a1a1a;-webkit-text-stroke:0.16px;">April 20, 2020</span>
<span class="t" style="left:564.30px;top:232.00px;font-size:5.05px;color:#1a1a1a;-webkit-text-stroke:0.16px;">Amount Due:</span>
<span class="t" style="left:638.27px;top:233.00px;font-size:4.62px;color:#1a1a1a;-webkit-text-stroke:0.16px;">2,706.13 MYR</span>
<span class="t" style="left:564.80px;top:238.00px;font-size:3.3px;color:#1a1a1a;font-weight:700;-webkit-text-stroke:0.16px;">If payment is received after 05/04/20, a late fee of 104.40 MYR will</span>
<span class="t" style="left:564.80px;top:242.00px;font-size:3.5px;color:#1a1a1a;font-weight:700;-webkit-text-stroke:0.16px;">be charged. If the Amount Due changes, the late fee may also</span>
<div class="a" style="left:562px;top:245.8px;width:108.4px;height:7.4px;background:#1760b2;"></div>
<span class="t" style="left:564.30px;top:249.00px;font-size:5.06px;color:#ffffff;-webkit-text-stroke:0.16px;">Explanation of Amount Due</span>
<div class="a" style="left:562px;top:253.2px;width:108.4px;height:4.2px;background:#868686;"></div>
<span class="t" style="left:564.30px;top:255.00px;font-size:3.76px;color:#111;-webkit-text-stroke:0.16px;">Contractual Amount Due</span>
<span class="t" style="left:564.90px;top:260.00px;font-size:3.79px;color:#1a1a1a;-webkit-text-stroke:0.16px;">Principal:</span>
<span class="t" style="left:643.58px;top:259.00px;font-size:4.16px;color:#1a1a1a;-webkit-text-stroke:0.16px;">436.53 MYR</span>
<span class="t" style="left:564.90px;top:266.00px;font-size:3.79px;color:#1a1a1a;-webkit-text-stroke:0.16px;">Interest:</span>
<span class="t" style="left:642.47px;top:266.00px;font-size:3.79px;color:#1a1a1a;-webkit-text-stroke:0.16px;">1,392.96 MYR</span>
<span class="t" style="left:564.90px;top:270.00px;font-size:3.9px;color:#1a1a1a;-webkit-text-stroke:0.16px;">Escrow (Taxes and Insurance):</span>
<span class="t" style="left:643.58px;top:270.00px;font-size:4.16px;color:#1a1a1a;-webkit-text-stroke:0.16px;">616.29 MYR</span>
<span class="t" style="left:564.90px;top:276.00px;font-size:3.93px;color:#1a1a1a;-webkit-text-stroke:0.16px;">Regular Monthly Payment:</span>
<span class="t" style="left:642.03px;top:277.00px;font-size:3.86px;color:#1a1a1a;-webkit-text-stroke:0.16px;">2,706.13 MYR</span>
<span class="t" style="left:564.90px;top:281.00px;font-size:3.95px;color:#1a1a1a;-webkit-text-stroke:0.16px;">Fees &amp; Charges (total outstanding):</span>
<span class="t" style="left:648.92px;top:281.00px;font-size:4px;color:#1a1a1a;-webkit-text-stroke:0.16px;">0.00 MYR</span>
<span class="t" style="left:564.90px;top:288.00px;font-size:3.19px;color:#1a1a1a;-webkit-text-stroke:0.16px;">Charges since last statement:</span>
<span class="t" style="left:651.32px;top:288.00px;font-size:3.46px;color:#1a1a1a;-webkit-text-stroke:0.16px;">0.00 MYR</span>
<span class="t" style="left:564.90px;top:293.00px;font-size:3.22px;color:#1a1a1a;-webkit-text-stroke:0.16px;">Credits since last statement:</span>
<span class="t" style="left:651.32px;top:293.00px;font-size:3.46px;color:#1a1a1a;-webkit-text-stroke:0.16px;">0.00 MYR</span>
<span class="t" style="left:564.90px;top:298.00px;font-size:4.02px;color:#1a1a1a;-webkit-text-stroke:0.16px;">Overdue Payment:</span>
<span class="t" style="left:648.92px;top:298.00px;font-size:4px;color:#1a1a1a;-webkit-text-stroke:0.16px;">0.00 MYR</span>
<div class="a" style="left:562px;top:303px;width:108.4px;height:5.6px;background:#868686;"></div>
<span class="t" style="left:564.90px;top:305.00px;font-size:3.49px;color:#111;font-weight:700;-webkit-text-stroke:0.16px;">Total Amount Due:</span>
<span class="t" style="left:642.03px;top:305.00px;font-size:3.86px;color:#111;font-weight:700;-webkit-text-stroke:0.16px;">2,706.13 MYR</span>
<div class="a" style="left:407px;top:258.1px;width:144.6px;height:53px;background:#ffffff;border:0.6px solid #6c7a90;"></div>
<div class="a" style="left:407px;top:258.1px;width:144.6px;height:5.5px;background:#1760b2;"></div>
<span class="t" style="left:409.60px;top:260.00px;font-size:5.08px;color:#ffffff;-webkit-text-stroke:0.16px;">Account Information</span>
<span class="t" style="left:409.60px;top:266.00px;font-size:3.82px;color:#1a1a1a;-webkit-text-stroke:0.16px;">Property Address:</span>
<span class="t" style="left:444.10px;top:266.00px;font-size:3.83px;color:#1a1a1a;-webkit-text-stroke:0.16px;">John Citizen</span>
<span class="t" style="left:442.70px;top:270.00px;font-size:3.87px;color:#1a1a1a;-webkit-text-stroke:0.16px;">No. 12, Jalan Seri Permai 5,</span>
<span class="t" style="left:442.70px;top:275.00px;font-size:3.95px;color:#1a1a1a;-webkit-text-stroke:0.16px;">Taman Seri Permai</span>
<span class="t" style="left:409.60px;top:284.00px;font-size:4.05px;color:#1a1a1a;-webkit-text-stroke:0.16px;">Unpaid Principal Balance:</span>
<span class="t" style="left:518.51px;top:284.00px;font-size:4.05px;color:#1a1a1a;-webkit-text-stroke:0.16px;">445,752.92 MYR</span>
<span class="t" style="left:409.60px;top:290.00px;font-size:3.92px;color:#1a1a1a;-webkit-text-stroke:0.16px;">Escrow Balance:</span>
<span class="t" style="left:524.10px;top:290.00px;font-size:3.88px;color:#1a1a1a;-webkit-text-stroke:0.16px;">5,779.19 MYR</span>
<span class="t" style="left:409.60px;top:296.00px;font-size:3.96px;color:#1a1a1a;-webkit-text-stroke:0.16px;">Suspense Balance:</span>
<span class="t" style="left:531.12px;top:296.00px;font-size:4px;color:#1a1a1a;-webkit-text-stroke:0.16px;">0.00 MYR</span>
<span class="t" style="left:409.60px;top:301.00px;font-size:3.88px;color:#1a1a1a;-webkit-text-stroke:0.16px;">Interest Rate:</span>
<span class="t" style="left:536.28px;top:302.00px;font-size:3.72px;color:#1a1a1a;-webkit-text-stroke:0.16px;">3.750%</span>
<span class="t" style="left:409.60px;top:306.00px;font-size:4px;color:#1a1a1a;-webkit-text-stroke:0.16px;">Prepayment Penalty:</span>
<span class="t" style="left:544.40px;top:307.00px;font-size:3.52px;color:#1a1a1a;-webkit-text-stroke:0.16px;">No</span>
<div class="a" style="left:407px;top:321.7px;width:144.4px;height:39.4px;background:#ffffff;border:0.6px solid #6c7a90;"></div>
<div class="a" style="left:407px;top:321.7px;width:144.4px;height:5.9px;background:#1760b2;"></div>
<span class="t" style="left:409.20px;top:324.00px;font-size:3.66px;color:#ffffff;font-weight:700;-webkit-text-stroke:0.16px;">Past Payments Breakdown</span>
<span class="t" style="left:474.01px;top:324.00px;font-size:3.64px;color:#ffffff;font-weight:700;-webkit-text-stroke:0.16px;">As of Last Stmt</span>
<span class="t" style="left:518.17px;top:324.00px;font-size:3.77px;color:#ffffff;font-weight:700;-webkit-text-stroke:0.16px;">Paid Year to Date</span>
<span class="t" style="left:409.20px;top:328.00px;font-size:4.26px;color:#1a1a1a;-webkit-text-stroke:0.16px;">Principal:</span>
<span class="t" style="left:477.91px;top:328.00px;font-size:4.1px;color:#1a1a1a;-webkit-text-stroke:0.16px;">854.66 MYR</span>
<span class="t" style="left:522.69px;top:328.00px;font-size:4.1px;color:#1a1a1a;-webkit-text-stroke:0.16px;">5,497.06 MYR</span>
<span class="t" style="left:409.20px;top:334.00px;font-size:4.26px;color:#1a1a1a;-webkit-text-stroke:0.16px;">Interest:</span>
<span class="t" style="left:474.49px;top:334.00px;font-size:4.1px;color:#1a1a1a;-webkit-text-stroke:0.16px;">1,395.18 MYR</span>
<span class="t" style="left:520.72px;top:334.00px;font-size:4.1px;color:#1a1a1a;-webkit-text-stroke:0.16px;">11,221.40 MYR</span>
<span class="t" style="left:409.20px;top:340.00px;font-size:3.83px;color:#1a1a1a;-webkit-text-stroke:0.16px;">Escrow (Taxes &amp; Insurance):</span>
<span class="t" style="left:477.91px;top:339.00px;font-size:4.1px;color:#1a1a1a;-webkit-text-stroke:0.16px;">516.29 MYR</span>
<span class="t" style="left:522.69px;top:339.00px;font-size:4.1px;color:#1a1a1a;-webkit-text-stroke:0.16px;">4,930.32 MYR</span>
<span class="t" style="left:409.20px;top:346.00px;font-size:3.76px;color:#1a1a1a;-webkit-text-stroke:0.16px;">Fees:</span>
<span class="t" style="left:482.47px;top:345.00px;font-size:4.1px;color:#1a1a1a;-webkit-text-stroke:0.16px;">0.00 MYR</span>
<span class="t" style="left:530.67px;top:345.00px;font-size:4.1px;color:#1a1a1a;-webkit-text-stroke:0.16px;">0.00 MYR</span>
<span class="t" style="left:409.20px;top:350.00px;font-size:4.07px;color:#1a1a1a;-webkit-text-stroke:0.16px;">Suspense*:</span>
<span class="t" style="left:482.47px;top:350.00px;font-size:4.1px;color:#1a1a1a;-webkit-text-stroke:0.16px;">0.00 MYR</span>
<span class="t" style="left:530.67px;top:350.00px;font-size:4.1px;color:#1a1a1a;-webkit-text-stroke:0.16px;">0.00 MYR</span>
<div class="a" style="left:407px;top:355px;width:144.4px;height:6px;background:#868686;"></div>
<span class="t" style="left:409.20px;top:356.00px;font-size:4.1px;color:#111;font-weight:700;-webkit-text-stroke:0.16px;">Total:</span>
<span class="t" style="left:474.49px;top:356.00px;font-size:4.1px;color:#111;font-weight:700;-webkit-text-stroke:0.16px;">2,706.13 MYR</span>
<span class="t" style="left:520.41px;top:356.00px;font-size:4.1px;color:#111;font-weight:700;-webkit-text-stroke:0.16px;">21,648.80 MYR</span>
<div class="a" style="left:460.5px;top:321.7px;width:0.7px;height:39.4px;background:#55647c;"></div>
<div class="a" style="left:504.2px;top:321.7px;width:0.7px;height:39.4px;background:#55647c;"></div>
<div class="a" style="left:562px;top:326px;width:108.2px;height:34.5px;background:#ffffff;border:0.6px solid #6c7a90;"></div>
<div class="a" style="left:562px;top:326px;width:108.2px;height:6.1px;background:#1760b2;"></div>
<span class="t" style="left:564.30px;top:328.00px;font-size:5.14px;color:#ffffff;-webkit-text-stroke:0.16px;">Important Messages</span>
<span class="t" style="left:564.30px;top:333.00px;font-size:4.04px;color:#1a1a1a;-webkit-text-stroke:0.16px;">*Suspense: Any amount received less than a full</span>
<span class="t" style="left:564.30px;top:338.00px;font-size:4.14px;color:#1a1a1a;-webkit-text-stroke:0.16px;">payment will be applied to a suspense account for your</span>
<span class="t" style="left:564.30px;top:343.00px;font-size:4.12px;color:#1a1a1a;-webkit-text-stroke:0.16px;">mortgage.  When  enough  is  received  to  equal  a  full</span>
<span class="t" style="left:564.30px;top:348.00px;font-size:4.02px;color:#1a1a1a;-webkit-text-stroke:0.16px;">payment, a full payment will be applied to your</span>
<span class="t" style="left:564.30px;top:354.00px;font-size:3.78px;color:#1a1a1a;-webkit-text-stroke:0.16px;">mortgage.</span>
<div class="a" style="left:417.6px;top:451.7px;width:241.8px;height:0.9px;background:#8e8e8e;"></div>
<svg class="a" style="left:435.6px;top:449.2px;" width="6.4" height="5.2" viewBox="0 0 6.4 5.2"><circle cx="1.3" cy="1.3" r="1.1" fill="#222"/><circle cx="1.3" cy="3.9" r="1.1" fill="#222"/><path d="M1.8 1.8 L6.2 3.9 M1.8 3.4 L6.2 1.3" stroke="#111" stroke-width="1"/></svg>
<div class="a" style="left:538px;top:449.4px;width:30px;height:3px;background:#ffffff;"></div>
<span class="t" style="left:538.60px;top:450.00px;font-size:2.84px;color:#111;font-weight:700;-webkit-text-stroke:0.16px;">Fold, Tear Along Here</span>
<div class="a" style="left:406.7px;top:455.5px;width:261.1px;height:6px;background:#1760b2;"></div>
<span class="t" style="left:443.30px;top:457.00px;font-size:4.32px;color:#ffffff;font-weight:700;-webkit-text-stroke:0.16px;">PAYMENT COUPON – Detach and Return With Your Payment Made Payable to: Bank Rakyat</span>
<div class="a" style="left:407.2px;top:472.5px;width:55.8px;height:13.6px;background:#1763bd;"></div>
<svg class="a" style="left:409.6px;top:474.4px" width="9.3" height="9" viewBox="0 0 19 18.4"><path d="M7.7 0.4 L10.6 2.4 L16 0.4 L18.8 9.6 L14 18.2 L4.2 15.2 L0.2 8.4 Z" fill="#f47b20"/><path d="M7.7 0.4 L10.6 2.4 L8.2 8.2 L0.2 8.4 Z" fill="#f58a35"/><path d="M16 0.4 L18.8 9.6 L16.4 14 L12.4 8.2 Z" fill="#f9862a"/><path d="M4.2 15.2 L14 18.2 L16.4 14 L8 10.6 Z" fill="#f28a3a"/><path d="M10.8 2 L8 8.4 M12.6 8.4 L16.2 14.4 M8 10.8 L3.6 11" stroke="#9a3c28" stroke-width="0.8" fill="none"/><path d="M8.6 6.6 L11.4 7 L12.4 9.2 L10 10.8 L8.2 9.4 Z" fill="#3c4aa8"/></svg>
<span class="t" style="left:420.60px;top:476.00px;font-size:4px;color:#eaf2ff;font-style:italic;transform:scaleX(1.322);-webkit-text-stroke:0.16px;">BANK</span>
<span class="t" style="left:435.00px;top:476.00px;font-size:4px;color:#ffffff;font-weight:700;font-style:italic;transform:scaleX(1.468);-webkit-text-stroke:0.16px;">RAKYAT</span>
<span class="t" dir="rtl" style="left:438px;top:479.8px;font-size:3.2px;color:#dce8f8;font-family:'DejaVu Sans',sans-serif;width:19px;text-align:right">بيڠک رعيت</span>
<span class="t" style="left:513.60px;top:481.00px;font-size:3.55px;color:#1a1a1a;-webkit-text-stroke:0.16px;">Payment Date: 00/04/2020</span>
<span class="t" style="left:408.00px;top:492.00px;font-size:3.88px;color:#1a1a1a;-webkit-text-stroke:0.16px;">Loan Number: 1546005293</span>
<div class="a" style="left:565.5px;top:473px;width:103.1px;height:39px;background:#f5dfdd;border-radius:3px;"></div>
<span class="t" style="left:567.60px;top:477.00px;font-size:3.6px;color:#1a1a1a;-webkit-text-stroke:0.16px;">Payment Amount</span>
<span class="t" style="left:604.70px;top:476.00px;font-size:4px;color:#111;font-weight:700;-webkit-text-stroke:0.16px;">MYR</span>
<div class="a" style="left:652.4px;top:477.2px;width:1.4px;height:0.6px;background:#d4b4b4;"></div>
<span class="t" style="left:567.60px;top:484.00px;font-size:3.6px;color:#1a1a1a;-webkit-text-stroke:0.16px;">Additional Principal</span>
<span class="t" style="left:604.70px;top:483.00px;font-size:4px;color:#111;font-weight:700;-webkit-text-stroke:0.16px;">MYR</span>
<div class="a" style="left:652.4px;top:484.1px;width:1.4px;height:0.6px;background:#d4b4b4;"></div>
<span class="t" style="left:567.60px;top:491.00px;font-size:3.6px;color:#1a1a1a;-webkit-text-stroke:0.16px;">Additional Escrow</span>
<span class="t" style="left:604.70px;top:490.00px;font-size:4px;color:#111;font-weight:700;-webkit-text-stroke:0.16px;">MYR</span>
<div class="a" style="left:652.4px;top:491.1px;width:1.4px;height:0.6px;background:#d4b4b4;"></div>
<span class="t" style="left:567.60px;top:498.00px;font-size:3.6px;color:#1a1a1a;-webkit-text-stroke:0.16px;">Other</span>
<span class="t" style="left:604.70px;top:497.00px;font-size:4px;color:#111;font-weight:700;-webkit-text-stroke:0.16px;">MYR</span>
<div class="a" style="left:652.4px;top:498px;width:1.4px;height:0.6px;background:#d4b4b4;"></div>
<span class="t" style="left:567.60px;top:505.00px;font-size:3.6px;color:#1a1a1a;-webkit-text-stroke:0.16px;">Total Amount Enclosed</span>
<span class="t" style="left:604.70px;top:504.00px;font-size:4px;color:#111;font-weight:700;-webkit-text-stroke:0.16px;">MYR</span>
<div class="a" style="left:652.4px;top:505px;width:1.4px;height:0.6px;background:#d4b4b4;"></div>
<span class="t" style="left:606.82px;top:510.00px;font-size:2.2px;color:#333;font-weight:700;-webkit-text-stroke:0.16px;">Please write the loan number on the front of your check</span>
<span class="t" style="left:408.00px;top:510.00px;font-size:3.62px;color:#1a1a1a;font-weight:700;-webkit-text-stroke:0.16px;">Bank Rakyat</span>
<span class="t" style="left:408.00px;top:514.00px;font-size:3.86px;color:#333;-webkit-text-stroke:0.16px;">Menara Bank Rakyat, No. 33, Jalan Rakyat,</span>
<span class="t" style="left:408.00px;top:518.00px;font-size:3.91px;color:#333;-webkit-text-stroke:0.16px;">Kuala Lumpur Sentral, 50706 Kuala Lumpur, Malaysia</span>
<div class="a" style="left:407px;top:526.7px;width:59px;height:1.7px;background:#b4b4b4;"></div>
<div class="a" style="left:407px;top:525.4px;width:59px;height:1.3px;background:repeating-linear-gradient(90deg,#b0b0b0 0 1px,transparent 1px 2px,#c4c4c4 2px 2.6px,transparent 2.6px 5px);"></div>
<div class="a" style="left:407px;top:528.4px;width:59px;height:1.3px;background:repeating-linear-gradient(90deg,transparent 0 1px,#b6b6b6 1px 1.8px,transparent 1.8px 4px,#bebebe 4px 5px,transparent 5px 7px);"></div>
<span class="t" style="left:614.45px;top:522.00px;font-size:3.87px;color:#1a1a1a;-webkit-text-stroke:0.16px;">JOHN CITIZEN HOME OWNER</span>
<span class="t" style="left:617.80px;top:527.00px;font-size:4.15px;color:#1a1a1a;-webkit-text-stroke:0.16px;">No. 12, Jalan Seri Permai 5,</span>
<span class="t" style="left:634.41px;top:531.00px;font-size:4.15px;color:#1a1a1a;-webkit-text-stroke:0.16px;">Taman Seri Permai</span>
<div class="a" style="left:858px;top:49px;width:12px;height:671px;background:#484848;"></div>
<div class="a" style="left:858px;top:49px;width:12px;height:12px;background:#444444;"></div>
<div class="a" style="left:858px;top:40px;width:222px;height:9px;background:#424242;"></div>
<svg class="a" style="left:886.6px;top:42.3px;" width="5" height="4.4" viewBox="0 0 5 4.4"><path d="M2 0.4 L0.6 2.2 L2 4 M4.3 0.4 L2.9 2.2 L4.3 4" stroke="#ececec" stroke-width="1.2" fill="none"/></svg>
<svg class="a" style="left:1066.8px;top:42.3px;" width="5" height="4.4" viewBox="0 0 5 4.4"><path d="M0.7 0.4 L2.1 2.2 L0.7 4 M3 0.4 L4.4 2.2 L3 4" stroke="#ececec" stroke-width="1.2" fill="none"/></svg>
<div class="a" style="left:870px;top:49px;width:1px;height:671px;background:#3c3c3c;"></div>
<div class="a" style="left:895px;top:49px;width:1px;height:671px;background:#3c3c3c;"></div>
<div class="a" style="left:871px;top:49px;width:24px;height:671px;background:#4a4a4a;"></div>
<div class="a" style="left:871px;top:49.5px;width:24px;height:47.5px;background:#535353;"></div>
<div class="a" style="left:877px;top:51.5px;width:12px;height:1px;border-top:1px dotted #6a6a6a;"></div>
<div class="a" style="left:871px;top:97px;width:24px;height:1.2px;background:#3c3c3c;"></div>
<div class="a" style="left:871px;top:99.5px;width:24px;height:44.5px;background:#535353;"></div>
<div class="a" style="left:877px;top:101.5px;width:12px;height:1px;border-top:1px dotted #6a6a6a;"></div>
<div class="a" style="left:871px;top:144px;width:24px;height:1.2px;background:#3c3c3c;"></div>
<div class="a" style="left:871px;top:147px;width:24px;height:26px;background:#535353;"></div>
<div class="a" style="left:877px;top:149px;width:12px;height:1px;border-top:1px dotted #6a6a6a;"></div>
<div class="a" style="left:871px;top:173px;width:24px;height:1.2px;background:#3c3c3c;"></div>
<div class="a" style="left:871px;top:176px;width:24px;height:25px;background:#535353;"></div>
<div class="a" style="left:877px;top:178px;width:12px;height:1px;border-top:1px dotted #6a6a6a;"></div>
<div class="a" style="left:871px;top:201px;width:24px;height:1.2px;background:#3c3c3c;"></div>
<svg class="a" style="left:876px;top:59px;" width="13" height="12" viewBox="0 0 13 12"><path d="M0.5 1.5 H5.5 M0.5 3.5 H4.5 M0.5 5.5 H3.5" stroke="#dcdcdc" stroke-width="0.9"/><path d="M12.4 0.6 L6.4 7 L7.6 8.2 L12.8 1.6 Z" fill="#dcdcdc"/><path d="M5.8 7.6 Q3.8 7.8 3.4 11 Q6.2 10.8 7 8.8 Z" fill="#dcdcdc"/></svg>
<svg class="a" style="left:876px;top:79px;" width="13" height="11" viewBox="0 0 13 11"><path d="M5 2.5 H12.5 M0.5 8 H8" stroke="#dcdcdc" stroke-width="1.1"/><ellipse cx="3" cy="2.5" rx="2.4" ry="1.7" fill="#dcdcdc"/><path d="M12 4.6 V11 L7.4 7.8 Z" fill="#dcdcdc"/></svg>
<span class="t" style="left:876.50px;top:107.00px;font-size:12px;color:#e6e6e6;">A</span>
<div class="a" style="left:886.2px;top:107.5px;width:1px;height:10px;background:#e6e6e6;"></div>
<span class="t" style="left:879.00px;top:126.00px;font-size:12px;color:#e6e6e6;font-weight:700;transform:scaleX(1.049);">¶</span>
<span class="t" style="left:877.00px;top:154.00px;font-size:13px;color:#e6e6e6;font-style:italic;font-family:'Liberation Serif',serif;transform:scaleX(1.259);">A</span>
<svg class="a" style="left:877px;top:184.5px;" width="11" height="11.5" viewBox="0 0 11 11.5"><path d="M5.5 0.6 L10.4 3.2 V8.4 L5.5 11 L0.6 8.4 V3.2 Z M0.6 3.2 L5.5 5.8 L10.4 3.2 M5.5 5.8 V11" fill="none" stroke="#bcbcbc" stroke-width="1"/></svg>
<div class="a" style="left:896px;top:48px;width:180px;height:337px;background:#535353;"></div>
<div class="a" style="left:896px;top:48px;width:180px;height:20px;background:#424242;"></div>
<div class="a" style="left:1010px;top:48px;width:40px;height:21px;background:#535353;"></div>
<span class="t" style="left:901.70px;top:55.00px;font-size:8.2px;color:#b8b8b8;font-weight:700;transform:scaleX(0.700);">Swatc</span>
<span class="t" style="left:924.40px;top:55.00px;font-size:8.2px;color:#b8b8b8;font-weight:700;transform:scaleX(0.775);">Gradi</span>
<span class="t" style="left:946.70px;top:55.00px;font-size:8.2px;color:#b8b8b8;font-weight:700;transform:scaleX(0.744);">Patter</span>
<span class="t" style="left:969.00px;top:55.00px;font-size:8.2px;color:#b8b8b8;font-weight:700;transform:scaleX(0.734);">Histor</span>
<span class="t" style="left:992.00px;top:55.00px;font-size:8.2px;color:#b8b8b8;font-weight:700;transform:scaleX(0.651);">Action</span>
<span class="t" style="left:1014.00px;top:54.00px;font-size:8.4px;color:#ffffff;font-weight:700;transform:scaleX(0.739);">Properties</span>
<svg class="a" style="left:1065.5px;top:56.5px;" width="7" height="5" viewBox="0 0 7 5"><path d="M0 0.6 H7 M0 2.6 H7 M0 4.6 H7" stroke="#c8c8c8" stroke-width="1"/></svg>
<div class="a" style="left:903px;top:73.3px;width:14px;height:14.5px;background:#3a3a3a;border-radius:1px;"></div>
<svg class="a" style="left:906px;top:75.8px;" width="8" height="9.6" viewBox="0 0 8 9.6"><path d="M0.6 0.6 H5 L7.4 3 V9 H0.6 Z M4.8 0.8 V3.2 H7.2" fill="none" stroke="#e0e0e0" stroke-width="1"/></svg>
<span class="t" style="left:920.50px;top:79.00px;font-size:8.2px;color:#dcdcdc;transform:scaleX(0.763);">Document</span>
<div class="a" style="left:896px;top:92.5px;width:170px;height:1px;background:#484848;"></div>
<svg class="a" style="left:900px;top:99.6px;" width="6" height="4" viewBox="0 0 6 4"><path d="M0.5 0.5 L3 3.2 L5.5 0.5" stroke="#a8a8a8" stroke-width="1" fill="none"/></svg>
<span class="t" style="left:910.00px;top:98.00px;font-size:8.6px;color:#f0f0f0;font-weight:700;transform:scaleX(0.729);">Canvas</span>
<span class="t" style="left:929.20px;top:116.00px;font-size:7.6px;color:#dcdcdc;transform:scaleX(0.697);">W</span>
<div class="a" style="left:938.7px;top:115.1px;width:30.8px;height:8.8px;background:#424242;border-radius:1px;"></div>
<span class="t" style="left:940.40px;top:116.00px;font-size:7.8px;color:#e8e8e8;transform:scaleX(0.800);">2232 px</span>
<span class="t" style="left:980.00px;top:116.00px;font-size:7.6px;color:#dcdcdc;transform:scaleX(0.789);">X</span>
<div class="a" style="left:988.3px;top:115.1px;width:32.6px;height:8.8px;background:#4d4d4d;border-radius:1px;"></div>
<span class="t" style="left:991.70px;top:116.00px;font-size:7.6px;color:#6c6c6c;transform:scaleX(0.766);">0 px</span>
<svg class="a" style="left:908.2px;top:123.6px;" width="4.8" height="10" viewBox="0 0 4.8 10"><rect x="0.8" y="0.6" width="3.2" height="4" rx="1.5" fill="none" stroke="#c8c8c8" stroke-width="0.9"/><rect x="0.8" y="5.4" width="3.2" height="4" rx="1.5" fill="none" stroke="#c8c8c8" stroke-width="0.9"/><path d="M2.4 3.4 V6.6" stroke="#c8c8c8" stroke-width="0.9"/></svg>
<span class="t" style="left:930.00px;top:134.00px;font-size:7.6px;color:#dcdcdc;transform:scaleX(0.802);">H</span>
<div class="a" style="left:938.7px;top:132.6px;width:30.8px;height:8.8px;background:#424242;border-radius:1px;"></div>
<span class="t" style="left:940.40px;top:134.00px;font-size:7.8px;color:#e8e8e8;transform:scaleX(0.800);">2854 px</span>
<span class="t" style="left:980.00px;top:134.00px;font-size:7.6px;color:#dcdcdc;transform:scaleX(0.789);">Y</span>
<div class="a" style="left:988.3px;top:132.6px;width:32.6px;height:8.8px;background:#4d4d4d;border-radius:1px;"></div>
<span class="t" style="left:991.70px;top:134.00px;font-size:7.6px;color:#6c6c6c;transform:scaleX(0.766);">0 px</span>
<div class="a" style="left:939px;top:151px;width:13.4px;height:15.8px;background:#2e2e2e;border:1px solid #6a6a6a;"></div>
<svg class="a" style="left:942px;top:153.4px;" width="7.6" height="11" viewBox="0 0 7.6 11"><rect x="0.5" y="0.5" width="6.6" height="10" fill="none" stroke="#d8d8d8" stroke-width="0.9"/><circle cx="3.8" cy="3.6" r="1.3" fill="#e8e8e8"/><path d="M1.8 10 V7 Q1.8 5.4 3.8 5.4 Q5.8 5.4 5.8 7 V10 Z" fill="#e8e8e8"/></svg>
<svg class="a" style="left:957px;top:155px;" width="11" height="8.8" viewBox="0 0 11 8.8"><rect x="0.5" y="0.5" width="10" height="7.8" fill="none" stroke="#d8d8d8" stroke-width="0.9"/><circle cx="5.5" cy="3" r="1.2" fill="#e8e8e8"/><path d="M3.2 7.8 V6 Q3.2 4.6 5.5 4.6 Q7.8 4.6 7.8 6 V7.8 Z" fill="#e8e8e8"/></svg>
<span class="t" style="left:938.60px;top:176.00px;font-size:8px;color:#dcdcdc;transform:scaleX(0.771);">Resolution: 250 pixels/inch</span>
<span class="t" style="left:918.30px;top:195.00px;font-size:8px;color:#dcdcdc;transform:scaleX(0.765);">Mode</span>
<div class="a" style="left:938.7px;top:192px;width:81.8px;height:13px;background:#424242;border-radius:1px;"></div>
<span class="t" style="left:943.30px;top:195.00px;font-size:8px;color:#e8e8e8;transform:scaleX(0.711);">RGB Color</span>
<svg class="a" style="left:1014.6px;top:197.6px;" width="4.2" height="3" viewBox="0 0 4.2 3"><path d="M0.4 0.5 L2.1 2.4 L3.8 0.5" stroke="#a4a4a4" stroke-width="0.9" fill="none"/></svg>
<div class="a" style="left:938.7px;top:209.4px;width:81.8px;height:13.2px;background:#424242;border-radius:1px;"></div>
<span class="t" style="left:943.30px;top:213.00px;font-size:8px;color:#e8e8e8;transform:scaleX(0.788);">16 Bits/Channel</span>
<svg class="a" style="left:1014.6px;top:215.2px;" width="4.2" height="3" viewBox="0 0 4.2 3"><path d="M0.4 0.5 L2.1 2.4 L3.8 0.5" stroke="#a4a4a4" stroke-width="0.9" fill="none"/></svg>
<span class="t" style="left:925.80px;top:231.00px;font-size:8px;color:#dcdcdc;transform:scaleX(0.783);">Fill</span>
<div class="a" style="left:939px;top:229.4px;width:11px;height:11px;background:#5a5a5a;border:1px solid #484848;"></div>
<div class="a" style="left:953px;top:229.5px;width:67.5px;height:11px;background:#424242;border-radius:1px;"></div>
<span class="t" style="left:957.50px;top:232.00px;font-size:8px;color:#e8e8e8;transform:scaleX(0.782);">Transparent</span>
<svg class="a" style="left:1014.6px;top:234px;" width="4.2" height="3" viewBox="0 0 4.2 3"><path d="M0.4 0.5 L2.1 2.4 L3.8 0.5" stroke="#a4a4a4" stroke-width="0.9" fill="none"/></svg>
<div class="a" style="left:896px;top:247px;width:170px;height:1px;background:#484848;"></div>
<svg class="a" style="left:900px;top:254.5px;" width="6" height="4" viewBox="0 0 6 4"><path d="M0.5 0.5 L3 3.2 L5.5 0.5" stroke="#a8a8a8" stroke-width="1" fill="none"/></svg>
<span class="t" style="left:910.50px;top:253.00px;font-size:8.6px;color:#f0f0f0;font-weight:700;transform:scaleX(0.739);">Rulers &amp; Grids</span>
<div class="a" style="left:903px;top:271.4px;width:15.3px;height:14.6px;background:#2e2e2e;"></div>
<svg class="a" style="left:906px;top:273.6px;" width="9.6" height="9.6" viewBox="0 0 9.6 9.6"><path d="M0.5 9.4 V0.5 H9.4 V3.2 H3.2 V9.4 Z" fill="#e8e8e8"/></svg>
<svg class="a" style="left:925px;top:272.6px;" width="12" height="12" viewBox="0 0 12 12"><rect x="0.6" y="0.6" width="10.8" height="10.8" fill="none" stroke="#d0d0d0" stroke-width="0.9"/><path d="M4.2 0.6 V11.4 M7.8 0.6 V11.4 M0.6 4.2 H11.4 M0.6 7.8 H11.4" stroke="#d0d0d0" stroke-width="0.8"/></svg>
<svg class="a" style="left:946.6px;top:272.6px;" width="10.6" height="12" viewBox="0 0 10.6 12"><rect x="0.6" y="0.6" width="9.4" height="10.8" fill="none" stroke="#d0d0d0" stroke-width="0.9"/><rect x="2.2" y="2.2" width="6.2" height="7.6" fill="none" stroke="#a8a8a8" stroke-width="0.8" stroke-dasharray="1 1"/></svg>
<div class="a" style="left:974.7px;top:272.8px;width:45.8px;height:12.5px;background:#424242;border-radius:1px;"></div>
<span class="t" style="left:979.00px;top:276.00px;font-size:8px;color:#e8e8e8;transform:scaleX(0.778);">Pixels</span>
<svg class="a" style="left:1014.6px;top:278px;" width="4.2" height="3" viewBox="0 0 4.2 3"><path d="M0.4 0.5 L2.1 2.4 L3.8 0.5" stroke="#a4a4a4" stroke-width="0.9" fill="none"/></svg>
<div class="a" style="left:896px;top:294.4px;width:170px;height:1px;background:#484848;"></div>
<svg class="a" style="left:900px;top:301.8px;" width="6" height="4" viewBox="0 0 6 4"><path d="M0.5 0.5 L3 3.2 L5.5 0.5" stroke="#a8a8a8" stroke-width="1" fill="none"/></svg>
<span class="t" style="left:910.50px;top:301.00px;font-size:8.6px;color:#f0f0f0;font-weight:700;transform:scaleX(0.720);">Guides</span>
<div class="a" style="left:903px;top:317px;width:15.3px;height:16.3px;background:#2e2e2e;"></div>
<svg class="a" style="left:905.4px;top:319.5px;" width="11" height="11" viewBox="0 0 11 11"><path d="M3.2 0 V11 M6 0 V11 M0 3.4 H11 M0 7.4 H11" stroke="#dcdcdc" stroke-width="0.9"/></svg>
<svg class="a" style="left:925.8px;top:319.5px;" width="11.4" height="11.4" viewBox="0 0 11.4 11.4"><path d="M3.2 0 V10 M5.6 0 V10 M0 3.4 H10 M0 6.6 H10" stroke="#dcdcdc" stroke-width="0.9"/><rect x="6.8" y="7.4" width="4.4" height="3.6" fill="#f0f0f0"/><path d="M7.8 7.4 V6.4 Q9 5.2 10.2 6.4 V7.4" fill="none" stroke="#f0f0f0" stroke-width="0.8"/></svg>
<div class="a" style="left:944px;top:317px;width:15px;height:16.3px;background:#2e2e2e;"></div>
<svg class="a" style="left:946px;top:319.5px;" width="11.4" height="11.4" viewBox="0 0 11.4 11.4"><path d="M3.6 0 V11 M0 3.4 H8" stroke="#dcdcdc" stroke-width="0.9"/><path d="M8.4 2 V8.2 M6.6 6.8 L8.4 9.8 L10.2 6.8 Z" stroke="#dcdcdc" stroke-width="0.9" fill="#dcdcdc"/><path d="M1 1.6 L0 3.4 L1 5" stroke="#dcdcdc" stroke-width="0.7" fill="none"/></svg>
<div class="a" style="left:974.7px;top:318.5px;width:45.8px;height:13px;background:#424242;border-radius:1px;"></div>
<div class="a" style="left:979px;top:324.3px;width:27px;height:1.4px;background:#d8d8d8;"></div>
<svg class="a" style="left:1014.6px;top:324px;" width="4.2" height="3" viewBox="0 0 4.2 3"><path d="M0.4 0.5 L2.1 2.4 L3.8 0.5" stroke="#a4a4a4" stroke-width="0.9" fill="none"/></svg>
<div class="a" style="left:896px;top:341.7px;width:170px;height:1px;background:#484848;"></div>
<svg class="a" style="left:900px;top:349.2px;" width="6" height="4" viewBox="0 0 6 4"><path d="M0.5 0.5 L3 3.2 L5.5 0.5" stroke="#a8a8a8" stroke-width="1" fill="none"/></svg>
<span class="t" style="left:910.50px;top:348.00px;font-size:8.6px;color:#f0f0f0;font-weight:700;transform:scaleX(0.739);">Quick Actions</span>
<div class="a" style="left:1066.2px;top:96px;width:7.8px;height:272px;background:#4a4a4a;"></div>
<div class="a" style="left:1066.8px;top:104.8px;width:6.8px;height:222px;background:#6b6b6b;"></div>
<svg class="a" style="left:1067.8px;top:99px;" width="4.6" height="3" viewBox="0 0 4.6 3"><path d="M0.4 2.6 L2.3 0.6 L4.2 2.6" stroke="#8a8a8a" stroke-width="0.9" fill="none"/></svg>
<svg class="a" style="left:1067.8px;top:360.5px;" width="4.6" height="3" viewBox="0 0 4.6 3"><path d="M0.4 0.4 L2.3 2.4 L4.2 0.4" stroke="#8a8a8a" stroke-width="0.9" fill="none"/></svg>
<div class="a" style="left:896px;top:384.5px;width:184px;height:2.2px;background:#3c3c3c;"></div>
<div class="a" style="left:1076px;top:48px;width:4px;height:672px;background:#3f3f3f;"></div>
<div class="a" style="left:896px;top:386.7px;width:180px;height:333.3px;background:#535353;"></div>
<div class="a" style="left:896px;top:386.7px;width:180px;height:20px;background:#424242;"></div>
<div class="a" style="left:896px;top:386.7px;width:30px;height:21px;background:#535353;"></div>
<span class="t" style="left:901.70px;top:392.00px;font-size:8.4px;color:#f4f4f4;font-weight:700;transform:scaleX(0.687);">Layers</span>
<svg class="a" style="left:1065.5px;top:394px;" width="7" height="5" viewBox="0 0 7 5"><path d="M0 0.6 H7 M0 2.6 H7 M0 4.6 H7" stroke="#c8c8c8" stroke-width="1"/></svg>
<div class="a" style="left:899.3px;top:413.6px;width:52.5px;height:12px;background:#424242;border-radius:1px;"></div>
<svg class="a" style="left:903.4px;top:416px;" width="6.4" height="7" viewBox="0 0 6.4 7"><circle cx="2.6" cy="2.6" r="2" fill="none" stroke="#e0e0e0" stroke-width="1"/><path d="M4 4.2 L6 6.6" stroke="#e0e0e0" stroke-width="1.2"/></svg>
<span class="t" style="left:912.00px;top:417.00px;font-size:8px;color:#e8e8e8;font-weight:700;transform:scaleX(0.731);">Kind</span>
<svg class="a" style="left:946px;top:418.4px;" width="5" height="3.4" viewBox="0 0 5 3.4"><path d="M0.5 0.5 L2.5 2.7 L4.5 0.5" stroke="#c0c0c0" stroke-width="0.9" fill="none"/></svg>
<svg class="a" style="left:959.2px;top:416px;" width="8.8" height="7.6" viewBox="0 0 8.8 7.6"><rect x="0.5" y="0.5" width="7.8" height="6.6" fill="none" stroke="#dadada" stroke-width="1"/><path d="M1.6 5.8 L3.4 3.6 L4.8 5 L5.8 4.2 L7.2 5.8 Z" fill="#dadada"/></svg>
<svg class="a" style="left:975px;top:416px;" width="7.8" height="7.8" viewBox="0 0 7.8 7.8"><circle cx="3.9" cy="3.9" r="3.3" fill="none" stroke="#dadada" stroke-width="1"/><path d="M6.2 1.5 A3.3 3.3 0 0 0 1.6 6.2 Z" fill="#dadada"/></svg>
<span class="t" style="left:990.00px;top:417.00px;font-size:10.5px;color:#e4e4e4;font-weight:700;font-family:'Liberation Serif',serif;transform:scaleX(1.085);">T</span>
<svg class="a" style="left:1004.6px;top:415.6px;" width="8.6" height="8.6" viewBox="0 0 8.6 8.6"><rect x="1.6" y="1.6" width="5.4" height="5.4" fill="none" stroke="#dadada" stroke-width="0.9"/><rect x="0.3" y="0.3" width="2.2" height="2.2" fill="#dadada"/><rect x="6.1" y="0.3" width="2.2" height="2.2" fill="#dadada"/><rect x="0.3" y="6.1" width="2.2" height="2.2" fill="#dadada"/><rect x="6.1" y="6.1" width="2.2" height="2.2" fill="#dadada"/></svg>
<svg class="a" style="left:1021px;top:415.4px;" width="7.8" height="9" viewBox="0 0 7.8 9"><path d="M0.5 0.5 H5 L7.3 2.8 V8.5 H0.5 Z" fill="none" stroke="#dadada" stroke-width="1"/><rect x="0.5" y="4.4" width="4" height="4.1" fill="#dadada"/></svg>
<svg class="a" style="left:1034.5px;top:412.5px;" width="7" height="9" viewBox="0 0 7 9"><circle cx="3.5" cy="3" r="2.6" fill="#f2f2f2"/><circle cx="3.5" cy="6.8" r="1.6" fill="#3a3a3a"/></svg>
<div class="a" style="left:896px;top:430.5px;width:170px;height:1px;background:#494949;"></div>
<div class="a" style="left:899.3px;top:434px;width:78.7px;height:11.2px;background:#505050;border:1px solid #5a5a5a;border-radius:1px;"></div>
<span class="t" style="left:904.00px;top:435.00px;font-size:7.8px;color:#7a7a7a;transform:scaleX(0.732);">Normal</span>
<svg class="a" style="left:971px;top:438.6px;" width="4.6" height="3" viewBox="0 0 4.6 3"><path d="M0.5 0.5 L2.3 2.5 L4.1 0.5" stroke="#6e6e6e" stroke-width="0.8" fill="none"/></svg>
<span class="t" style="left:983.20px;top:435.00px;font-size:7.8px;color:#7e7e7e;transform:scaleX(0.748);">Opacity:</span>
<div class="a" style="left:1008.9px;top:435px;width:20.5px;height:8.6px;background:#4b4b4b;"></div>
<span class="t" style="left:1011.50px;top:436.00px;font-size:7.4px;color:#686868;transform:scaleX(0.740);">100%</span>
<div class="a" style="left:1032px;top:435px;width:5px;height:8.6px;background:#4f4f4f;border:1px solid #5a5a5a;"></div>
<div class="a" style="left:896px;top:447.6px;width:170px;height:1px;background:#494949;"></div>
<span class="t" style="left:899.80px;top:455.00px;font-size:7.8px;color:#7e7e7e;transform:scaleX(0.751);">Lock:</span>
<svg class="a" style="left:919.8px;top:454.6px;" width="7.8" height="7.8" viewBox="0 0 7.8 7.8"><rect x="0" y="0" width="2.6" height="2.6" fill="#a8a8a8"/><rect x="5.2" y="0" width="2.6" height="2.6" fill="#a8a8a8"/><rect x="2.6" y="2.6" width="2.6" height="2.6" fill="#a8a8a8"/><rect x="0" y="5.2" width="2.6" height="2.6" fill="#a8a8a8"/><rect x="5.2" y="5.2" width="2.6" height="2.6" fill="#a8a8a8"/><rect x="0.3" y="0.3" width="7.2" height="7.2" fill="none" stroke="#a8a8a8" stroke-width="0.5"/></svg>
<svg class="a" style="left:933.5px;top:454px;" width="8.6" height="9" viewBox="0 0 8.6 9"><path d="M8 0.6 L3.6 5.4 L4.6 6.4 L8.4 1.4 Z" fill="#a8a8a8"/><path d="M3.2 5.8 Q1.4 6 1 8.6 Q3.4 8.4 4 6.8 Z" fill="#a8a8a8"/></svg>
<svg class="a" style="left:947.2px;top:454.4px;" width="8.4" height="8.4" viewBox="0 0 8.4 8.4"><path d="M4.2 0 L5.6 1.8 H4.7 V3.7 H6.6 V2.8 L8.4 4.2 L6.6 5.6 V4.7 H4.7 V6.6 H5.6 L4.2 8.4 L2.8 6.6 H3.7 V4.7 H1.8 V5.6 L0 4.2 L1.8 2.8 V3.7 H3.7 V1.8 H2.8 Z" fill="#a8a8a8"/></svg>
<svg class="a" style="left:960.9px;top:454.6px;" width="8.8" height="8" viewBox="0 0 8.8 8"><path d="M0 2 H6.6 V8 M2 0 V6 H8.8" fill="none" stroke="#a8a8a8" stroke-width="0.9"/></svg>
<svg class="a" style="left:975.5px;top:454px;" width="7" height="8.8" viewBox="0 0 7 8.8"><rect x="0.3" y="3.6" width="6.4" height="5" rx="0.6" fill="#a8a8a8"/><path d="M1.6 3.8 V2.4 Q1.6 0.6 3.5 0.6 Q5.4 0.6 5.4 2.4 V3.8" fill="none" stroke="#a8a8a8" stroke-width="1"/></svg>
<span class="t" style="left:996.90px;top:455.00px;font-size:7.8px;color:#7e7e7e;transform:scaleX(0.701);">Fill:</span>
<div class="a" style="left:1008.9px;top:454.7px;width:20.5px;height:8.6px;background:#4b4b4b;"></div>
<span class="t" style="left:1011.50px;top:455.00px;font-size:7.4px;color:#686868;transform:scaleX(0.740);">100%</span>
<div class="a" style="left:1032px;top:454.7px;width:5px;height:8.6px;background:#4f4f4f;border:1px solid #5a5a5a;"></div>
<div class="a" style="left:896px;top:467.6px;width:180px;height:1px;background:#454545;"></div>
<div class="a" style="left:914.3px;top:468.6px;width:1px;height:237px;background:#494949;"></div>
<div class="a" style="left:896px;top:486.4px;width:170px;height:1px;background:#494949;"></div>
<div class="a" style="left:896px;top:515px;width:170px;height:1px;background:#494949;"></div>
<div class="a" style="left:896px;top:543.8px;width:170px;height:1px;background:#494949;"></div>
<div class="a" style="left:896px;top:572px;width:170px;height:1px;background:#494949;"></div>
<div class="a" style="left:896px;top:600.75px;width:170px;height:1px;background:#494949;"></div>
<div class="a" style="left:896px;top:628.75px;width:170px;height:1px;background:#494949;"></div>
<div class="a" style="left:896px;top:657px;width:170px;height:1px;background:#494949;"></div>
<div class="a" style="left:896px;top:685.75px;width:170px;height:1px;background:#494949;"></div>
<svg class="a" style="left:901.5px;top:475.7px;" width="8.6" height="6" viewBox="0 0 8.6 6"><path d="M0.3 3 Q4.3 -1.6 8.3 3 Q4.3 7.6 0.3 3 Z" fill="#cfcfcf"/><circle cx="4.3" cy="3" r="1.7" fill="#535353"/><circle cx="4.3" cy="3" r="0.8" fill="#cfcfcf"/></svg>
<svg class="a" style="left:927.9px;top:477px;" width="5" height="3.6" viewBox="0 0 5 3.6"><path d="M0.4 0.4 L2.5 2.8 L4.6 0.4" stroke="#b4b4b4" stroke-width="0.9" fill="none"/></svg>
<svg class="a" style="left:934.7px;top:474.4px;" width="9.8" height="7.8" viewBox="0 0 9.8 7.8"><path d="M0.3 7.5 V0.4 H3.6 L4.6 1.6 H9.4 V7.5 Z" fill="#e4e4e4"/><path d="M0.3 3 H9.4" stroke="#535353" stroke-width="0.7"/></svg>
<span class="t" style="left:951.20px;top:475.00px;font-size:7.8px;color:#e8e8e8;font-weight:700;transform:scaleX(0.733);">edite text</span>
<svg class="a" style="left:901.5px;top:498.6px;" width="8.6" height="6" viewBox="0 0 8.6 6"><path d="M0.3 3 Q4.3 -1.6 8.3 3 Q4.3 7.6 0.3 3 Z" fill="#cfcfcf"/><circle cx="4.3" cy="3" r="1.7" fill="#535353"/><circle cx="4.3" cy="3" r="0.8" fill="#cfcfcf"/></svg>
<span class="t" style="left:942.20px;top:496.00px;font-size:14.5px;color:#eaeaea;font-family:'Liberation Serif',serif;transform:scaleX(1.107);">T</span>
<span class="t" style="left:963.00px;top:498.00px;font-size:7.8px;color:#e8e8e8;font-weight:700;transform:scaleX(0.739);">Layer 2</span>
<svg class="a" style="left:901.5px;top:527px;" width="8.6" height="6" viewBox="0 0 8.6 6"><path d="M0.3 3 Q4.3 -1.6 8.3 3 Q4.3 7.6 0.3 3 Z" fill="#cfcfcf"/><circle cx="4.3" cy="3" r="1.7" fill="#535353"/><circle cx="4.3" cy="3" r="0.8" fill="#cfcfcf"/></svg>
<div class="a" style="left:937.8px;top:519.5px;width:15.4px;height:20.5px;background-color:#fff;background-image:conic-gradient(#d4d4d4 25%,#fff 0 50%,#d4d4d4 0 75%,#fff 0);background-size:4px 4px;"></div>
<div class="a" style="left:939.4px;top:521.6px;width:2.6px;height:3px;background:#8a5a4a;"></div>
<span class="t" style="left:959.20px;top:527.00px;font-size:7.8px;color:#e8e8e8;font-weight:700;transform:scaleX(0.732);">Layer 3</span>
<svg class="a" style="left:901.5px;top:555.4px;" width="8.6" height="6" viewBox="0 0 8.6 6"><path d="M0.3 3 Q4.3 -1.6 8.3 3 Q4.3 7.6 0.3 3 Z" fill="#cfcfcf"/><circle cx="4.3" cy="3" r="1.7" fill="#535353"/><circle cx="4.3" cy="3" r="0.8" fill="#cfcfcf"/></svg>
<span class="t" style="left:942.20px;top:552.00px;font-size:14.5px;color:#eaeaea;font-family:'Liberation Serif',serif;transform:scaleX(1.107);">T</span>
<span class="t" style="left:963.20px;top:555.00px;font-size:7.8px;color:#e8e8e8;font-weight:700;transform:scaleX(0.822);">citta0000000...&lt;&lt;&lt;&lt;&lt;&lt;&lt;&lt;0 d</span>
<div class="a" style="left:902px;top:582.5px;width:8px;height:8px;border:1px solid #5a5a5a;opacity:.7;"></div>
<span class="t" style="left:942.20px;top:581.00px;font-size:14.5px;color:#eaeaea;font-family:'Liberation Serif',serif;transform:scaleX(1.107);">T</span>
<span class="t" style="left:963.20px;top:584.00px;font-size:7.8px;color:#e8e8e8;font-weight:700;transform:scaleX(0.730);">1aa</span>
<svg class="a" style="left:901.5px;top:612.5px;" width="8.6" height="6" viewBox="0 0 8.6 6"><path d="M0.3 3 Q4.3 -1.6 8.3 3 Q4.3 7.6 0.3 3 Z" fill="#cfcfcf"/><circle cx="4.3" cy="3" r="1.7" fill="#535353"/><circle cx="4.3" cy="3" r="0.8" fill="#cfcfcf"/></svg>
<span class="t" style="left:942.20px;top:609.00px;font-size:14.5px;color:#eaeaea;font-family:'Liberation Serif',serif;transform:scaleX(1.107);">T</span>
<span class="t" style="left:963.20px;top:612.00px;font-size:7.8px;color:#e8e8e8;font-weight:700;transform:scaleX(0.730);">169</span>
<svg class="a" style="left:901.5px;top:641.25px;" width="8.6" height="6" viewBox="0 0 8.6 6"><path d="M0.3 3 Q4.3 -1.6 8.3 3 Q4.3 7.6 0.3 3 Z" fill="#cfcfcf"/><circle cx="4.3" cy="3" r="1.7" fill="#535353"/><circle cx="4.3" cy="3" r="0.8" fill="#cfcfcf"/></svg>
<span class="t" style="left:942.20px;top:638.00px;font-size:14.5px;color:#eaeaea;font-family:'Liberation Serif',serif;transform:scaleX(1.107);">T</span>
<span class="t" style="left:963.20px;top:641.00px;font-size:7.8px;color:#e8e8e8;font-weight:700;transform:scaleX(0.649);">m</span>
<svg class="a" style="left:901.5px;top:669.5px;" width="8.6" height="6" viewBox="0 0 8.6 6"><path d="M0.3 3 Q4.3 -1.6 8.3 3 Q4.3 7.6 0.3 3 Z" fill="#cfcfcf"/><circle cx="4.3" cy="3" r="1.7" fill="#535353"/><circle cx="4.3" cy="3" r="0.8" fill="#cfcfcf"/></svg>
<span class="t" style="left:942.20px;top:667.00px;font-size:14.5px;color:#eaeaea;font-family:'Liberation Serif',serif;transform:scaleX(1.107);">T</span>
<span class="t" style="left:963.20px;top:669.00px;font-size:7.8px;color:#e8e8e8;font-weight:700;transform:scaleX(0.730);">129 1 a</span>
<svg class="a" style="left:901.5px;top:697.75px;" width="8.6" height="6" viewBox="0 0 8.6 6"><path d="M0.3 3 Q4.3 -1.6 8.3 3 Q4.3 7.6 0.3 3 Z" fill="#cfcfcf"/><circle cx="4.3" cy="3" r="1.7" fill="#535353"/><circle cx="4.3" cy="3" r="0.8" fill="#cfcfcf"/></svg>
<span class="t" style="left:942.20px;top:695.00px;font-size:14.5px;color:#eaeaea;font-family:'Liberation Serif',serif;transform:scaleX(1.107);">T</span>
<span class="t" style="left:963.20px;top:697.00px;font-size:7.8px;color:#e8e8e8;font-weight:700;transform:scaleX(0.743);">01.01.1990</span>
<div class="a" style="left:1066.2px;top:470px;width:7.8px;height:235px;background:#4a4a4a;"></div>
<div class="a" style="left:1066.8px;top:490.7px;width:6.8px;height:64.7px;background:#6b6b6b;"></div>
<svg class="a" style="left:1067.8px;top:475.5px;" width="4.6" height="3" viewBox="0 0 4.6 3"><path d="M0.4 2.6 L2.3 0.6 L4.2 2.6" stroke="#9a9a9a" stroke-width="0.9" fill="none"/></svg>
<svg class="a" style="left:1067.8px;top:696.5px;" width="4.6" height="3" viewBox="0 0 4.6 3"><path d="M0.4 0.4 L2.3 2.4 L4.2 0.4" stroke="#9a9a9a" stroke-width="0.9" fill="none"/></svg>
<div class="a" style="left:896px;top:705.5px;width:180px;height:14.5px;background:#535353;"></div>
<div class="a" style="left:896px;top:705.5px;width:180px;height:1px;background:#454545;"></div>
<svg class="a" style="left:948px;top:711.4px;" width="9" height="5" viewBox="0 0 9 5"><rect x="0.4" y="0.6" width="4.6" height="3.8" rx="1.9" fill="none" stroke="#777777" stroke-width="0.9"/><rect x="4" y="0.6" width="4.6" height="3.8" rx="1.9" fill="none" stroke="#777777" stroke-width="0.9"/></svg>
<span class="t" style="left:966.00px;top:710.00px;font-size:8.6px;color:#777777;font-style:italic;font-family:'Liberation Serif',serif;transform:scaleX(1.289);">fx</span>
<svg class="a" style="left:981.5px;top:709.8px;" width="9" height="7.6" viewBox="0 0 9 7.6"><rect x="0.5" y="0.5" width="8" height="6.6" fill="#dcdcdc"/><circle cx="4.5" cy="3.8" r="2.1" fill="#535353"/></svg>
<svg class="a" style="left:999.6px;top:709.6px;" width="8.4" height="8.4" viewBox="0 0 8.4 8.4"><circle cx="4.2" cy="4.2" r="3.6" fill="none" stroke="#dcdcdc" stroke-width="1"/><path d="M6.75 1.65 A3.6 3.6 0 0 0 1.65 6.75 Z" fill="#dcdcdc"/></svg>
<svg class="a" style="left:1015.6px;top:710px;" width="9" height="7.2" viewBox="0 0 9 7.2"><path d="M0.3 6.9 V0.3 H3.4 L4.4 1.5 H8.7 V6.9 Z" fill="#dcdcdc"/></svg>
<svg class="a" style="left:1033.6px;top:709.6px;" width="8" height="8.4" viewBox="0 0 8 8.4"><rect x="0.5" y="0.5" width="7" height="7.4" fill="none" stroke="#dcdcdc" stroke-width="1"/><path d="M4 2.2 V6.2 M2 4.2 H6" stroke="#dcdcdc" stroke-width="1"/></svg>
<svg class="a" style="left:1050.4px;top:709.4px;" width="7" height="8.6" viewBox="0 0 7 8.6"><path d="M0.3 1.6 H6.7 M2.4 1.4 V0.5 H4.6 V1.4 M1 1.8 L1.4 8.2 H5.6 L6 1.8" fill="none" stroke="#777777" stroke-width="0.9"/><path d="M2.6 3 V7 M4.4 3 V7" stroke="#777777" stroke-width="0.7"/></svg>
</div>
</body>
</html>
